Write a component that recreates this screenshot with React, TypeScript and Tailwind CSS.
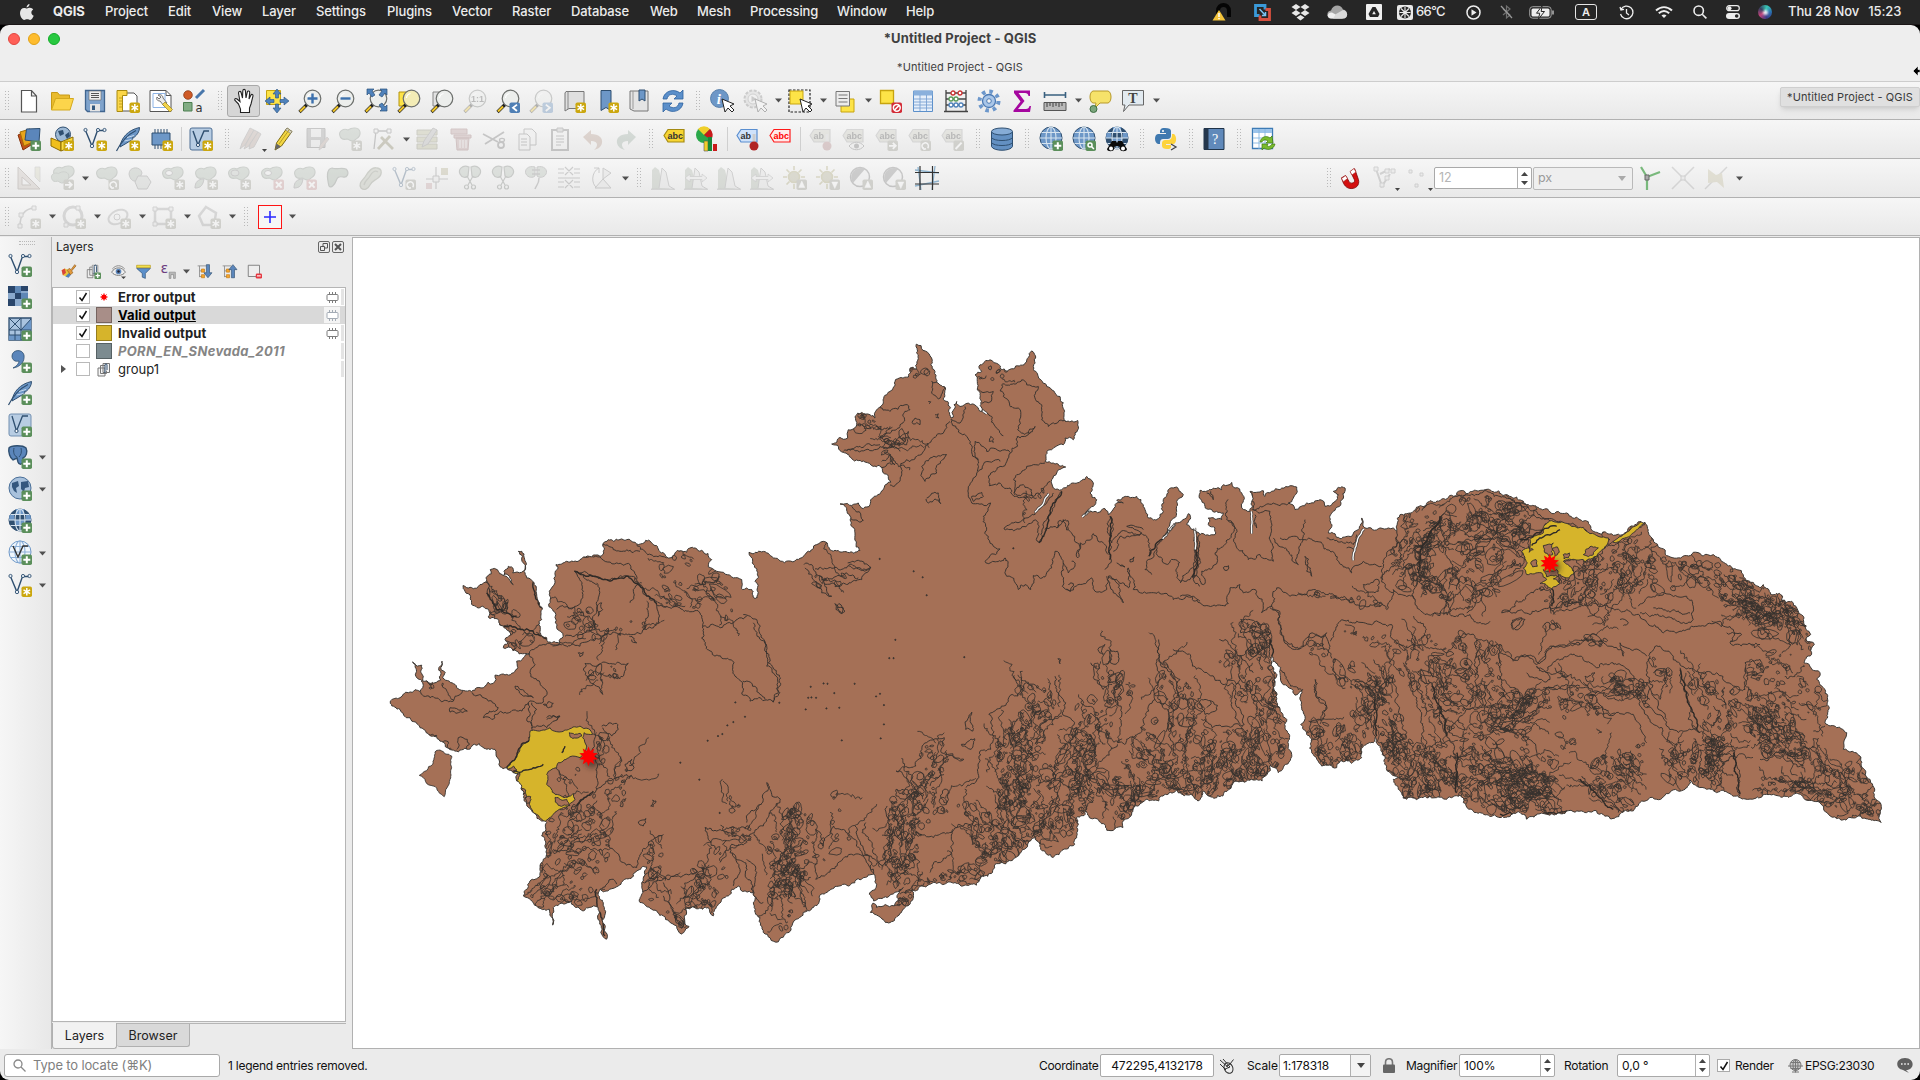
import React from "react";

/* ------------------------------------------------------------------ */
/* Icons                                                               */
/* ------------------------------------------------------------------ */

const BLUE = "#6d97c7";
const NAVY = "#2f4f70";

function Svg({ children, s = 24 }: { children: React.ReactNode; s?: number }) {
  return (
    <svg width={s} height={s} viewBox="0 0 24 24" fill="none" className="shrink-0 overflow-visible">
      {children}
    </svg>
  );
}

function Badge({ k }: { k: string }) {
  const colors: Record<string, string> = { y: "#cba70f", g: "#5b8f5b", r: "#8d8d80", x: "#c48a8a", b: "#4f7fb5", d: "#d32b36" };
  const c = colors[k[0]];
  const t = k.slice(1);
  return (
    <g>
      <rect x="13.5" y="13.5" width="10.5" height="10.5" rx="1.8" fill={c} />
      <g stroke="#fff" strokeWidth="1.5">
        {t === "*" && <path d="M18.8 15v7.6M15.5 16.9l6.6 3.8M15.5 20.7l6.6-3.8" />}
        {t === "+" && <path d="M18.8 15.2v7M15.3 18.7h7" strokeWidth="2" />}
        {t === "x" && <path d="M16 16l5.6 5.6M16 21.6l5.6-5.6" strokeWidth="2" />}
        {t === "<" && <path d="M21 15.6l-4 3.2 4 3.2" strokeWidth="1.8" />}
        {t === ">" && <path d="M16.8 15.6l4 3.2-4 3.2" strokeWidth="1.8" />}
        {t === "a" && <path d="M15 18.8h6M18.8 15.8l3 3-3 3" strokeWidth="1.8" />}
        {t === "u" && <path d="M18.8 15l3 6.5h-6z" fill="#fff" strokeWidth=".5" />}
        {t === "v" && <path d="M18.8 22.5l3-6.5h-6z" fill="#fff" strokeWidth=".5" />}
        {t === "o" && <path d="M17 22a3.2 3.2 0 1 1 3.6-.8M16 20.3l1 2 2-.6" />}
        {t === "s" && (<><circle cx="18" cy="18" r="2" /><path d="M19.5 19.5l2.4 2.6" /></>)}
        {t === "0" && (<><circle cx="18.8" cy="18.8" r="3.4" /><path d="M16.5 21l4.6-4.6" /></>)}
        {t === "/" && <path d="M15.6 22l6-6.4" strokeWidth="2" />}
      </g>
    </g>
  );
}

const Lens = ({ c = "#eceeec" }: { c?: string }) => (
  <>
    <path d="M9 15.5L1.5 23" stroke="#222" strokeWidth="3.2" />
    <path d="M7 17.5L2 22.5" stroke="#f0c52a" strokeWidth="2.2" />
    <circle cx="14.5" cy="9.500" r="8.300" fill={c} stroke="#6c6f6c" strokeWidth="1.2" />
    <path d="M9.500 9a5 5 0 0 1 4-4.500" stroke="#fff" strokeWidth="1.200" />
  </>
);
const Vee = () => (
  <g stroke={NAVY} strokeWidth="1.4">
    <path d="M2.500 3.500l6.500 15.500L14.500 3.500h7" />
    <g fill="#e9eff5" strokeWidth=".9">
      <circle cx="2.500" cy="3" r="1.600" /><circle cx="9" cy="19" r="1.700" /><circle cx="15" cy="3" r="1.600" /><circle cx="21.500" cy="3" r="1.600" />
    </g>
  </g>
);
const Feather = () => (
  <>
    <path d="M4 20C5 11 12 3 23.500.500c0 4-2 7-5 9.500l-2 .5.5 1.200C13 15 9 17 4 20z" fill={BLUE} stroke={NAVY} strokeWidth="1" />
    <path d="M.500 24C5 15 11 8 20 3.500" stroke={NAVY} strokeWidth="1.200" />
    <path d="M8.500 14l7-1.500M11 10.500l7-2" stroke="#c6daee" strokeWidth="1" />
  </>
);
const Globe = ({ dark = false, light = false }: { dark?: boolean; light?: boolean }) => (
  <>
    <circle cx="12" cy="11" r="11" fill={light ? "#f0f6fc" : dark ? NAVY : BLUE} stroke={light ? BLUE : NAVY} strokeWidth="1" />
    {dark && <path d="M1.500 6h4.500v5H1zM8 0h8v5H8zM7 11h10v5H7zM18 6h4.500l.5 5h-5z" fill={BLUE} />}
    <g stroke={light ? "#8db0d8" : "#d6e3ef"} strokeWidth="1.1">
      <ellipse cx="12" cy="11" rx="5" ry="11" /><path d="M12 0v22M1 11h22M2.500 5.500h19M2.500 16.500h19" />
    </g>
  </>
);
const Blob = () => <path d="M2 9c-2-5 4-8 8-6 4-3 11-3 12 2 1 6-4 6-6 9-4 1-5-2-7-2-4 1-6 0-7-3z" fill="#a5b2a5" stroke="#7b857b" strokeWidth="1.1" />;
const Cursor = () => <path d="M12 10l3 13 3-4 4 4 2-2-4-4 4-2z" fill="#fff" stroke="#222" strokeWidth="1" />;
const Tag = ({ f = "#f7d532", s = "#a48a12", t = "#333", l = "abc" }) => (
  <>
    <path d="M2 8.500l4-6H22v12.500H6z" fill={f} stroke={s} strokeWidth="1.200" />
    <text x="5.500" y="12.200" fontSize="9" fontWeight="700" fontFamily="Liberation Sans, sans-serif" fill={t}>{l}</text>
  </>
);
const Scissor = () => (
  <g stroke="#6a706a" strokeWidth="1.200">
    <path d="M11 1C4-2 0 4 2 8s6 4 8 2zM13 1c7-3 11 3 9 7s-6 4-8 2z" fill="#abb6ab" />
    <path d="M9 10l5 9M15 10l-5 9" /><circle cx="8.500" cy="21" r="2" /><circle cx="15.500" cy="21" r="2" />
  </g>
);
const Hist = () => (
  <>
    <path d="M1 23V4l3-3 4 3 3 12 8 7z" fill="#a3ad9f" /><path d="M8 22L11 2l4 4 3 14 5 3" stroke="#858585" fill="#dedede" /><path d="M0 23.200h24" stroke="#777" />
  </>
);
const Sun = () => (
  <g stroke="#a09a62" strokeWidth="1.600"><circle cx="11" cy="11" r="5.500" fill="#a8a584" /><path d="M11 0v4M11 18v5M0 11h4M18 11h4M3.500 3.500l3 3M18.500 3.500l-3 3M3.500 18.500l3-3" /></g>
);
const Contrast = () => (<><circle cx="11" cy="11" r="9.500" stroke="#666" strokeWidth="1.500" fill="#eee" /><path d="M4 17A9.500 9.500 0 0 1 16 3z" fill="#777" /></>);

const icons: Record<string, React.ReactNode> = {
  newDoc: <path d="M4.500 1.500h10l5 5.500v16h-15zM14.500 1.500V7h5" fill="#fff" stroke="#555" strokeWidth="1.200" />,
  open: <><path d="M1.500 21V3.500h6l2 2.500h10v4" fill="#e9bb2e" stroke="#c79a17" /><path d="M1.500 21l4-11.500h18L20 21z" fill="#fcd54b" stroke="#d4a91d" /></>,
  save: <><path d="M2.500 1.500h19v21h-17l-2-2z" fill="#7fa3cc" stroke="#40658f" strokeWidth="1.300" /><path d="M6 2h12v9H6z" fill="#eee" stroke="#666" strokeWidth=".6" /><path d="M8 4.500h8M8 6.500h8M8 8.500h8" stroke="#555" /><path d="M7 15h10v7.500H7z" fill="#e5e5e5" /><path d="M9 16.500h3v4.500H9z" fill="#33597f" /></>,
  layout: <><path d="M5 4h13l3 3v15H5z" fill="#fff" stroke="#555" /><path d="M1 1.500h10v5H6.500v16H1z" fill="#fbd648" stroke="#a88a10" /><path d="M3 9h3M3 12h3M3 15h3M3 18h3" stroke="#a88a10" strokeWidth=".7" /><Badge k="y*" /></>,
  layoutMgr: <><path d="M1 1.500h16l5 5v16H1z" fill="#fff" stroke="#555" /><path d="M17 1.500v5h5" stroke="#555" /><path d="M4 4.500h12v14H4z" stroke="#8db4e6" /><path d="M9 6c2-1 5 0 5 3l4 5-3 3-4-5c-3 0-4-2-3-4l2 2 2-2z" fill="#ececec" stroke="#666" strokeWidth=".9" /><path d="M16 13l7.500 7.500-2.500 2.500-7.500-7.500z" fill="#f2d34a" stroke="#97801b" strokeWidth=".7" /></>,
  styles: <><circle cx="6" cy="6" r="4.300" fill="#cf5a26" stroke="#8c3a16" strokeWidth=".8" /><path d="M14 9l8-8" stroke="#4877ab" strokeWidth="3" /><path d="M1.500 13.500h8.500v8.500H1.500z" fill="#82ad85" stroke="#4c7f50" /><text x="13.500" y="22.500" fontSize="11.500" fontFamily="DejaVu Sans, sans-serif" fill="#333">a</text></>,
  hand: <path d="M6.500 15L3 11.500c-1-1.500.8-2.500 2-1.500l3 2.500L6.500 4c0-2 2.200-2 2.600-.5L10.500 9l.3-7.300c.2-1.800 2.500-1.700 2.600 0L14 9l1.300-6c.5-1.600 2.600-1.200 2.400.6L17 10l1.800-3.800c.8-1.400 2.500-.7 2.200.8L19 15l-1.500 4v4.500h-9V20z" fill="#fff" stroke="#222" strokeWidth="1.100" />,
  pan: <><path d="M1.500 1.500h14v14h-14z" fill="#fde347" stroke="#c7a40f" /><g fill="#4f82bb" stroke="#28507c" strokeWidth=".6"><path d="M12 0l4 5h-2.500v4h-3V5H8zM12 24l4-5h-2.500v-4h-3v4H8zM0 12l5-4v2.500h4v3H5V16zM24 12l-5-4v2.500h-4v3h4V16z" /></g></>,
  zoomIn: <><Lens /><path d="M14.500 4.500v10M9.500 9.500h10" stroke="#3d71ad" strokeWidth="2.400" /></>,
  zoomOut: <><Lens /><path d="M9.500 9.500h10" stroke="#3d71ad" strokeWidth="2.400" /></>,
  zoomFull: <><Lens /><g fill="#4f82bb" stroke="#28507c" strokeWidth=".7"><path d="M3 0h7L8 2l3 4-3 2-3-4-2 2zM23 0h-7l2 2-3 4 3 2 3-4 2 2zM23 22h-7l2-2-3-4 3-2 3 4 2-2z" /></g></>,
  zoomSel: <><path d="M2 3h10v14H2z" fill="#fde347" stroke="#b49410" /><Lens c="#f3ecb6" /></>,
  zoomLayer: <><path d="M3 3h9v14H3z" fill="#e2e2e2" stroke="#888" /><Lens /></>,
  zoomNat: <><Lens /><text x="8" y="13" fontSize="9" fontWeight="700" fontFamily="Liberation Sans, sans-serif" fill="#444">1:1</text></>,
  zoomLast: <><Lens /><Badge k="b<" /></>,
  zoomNext: <><Lens /><Badge k="b>" /></>,
  newMap: <><path d="M4 2.500h18v17H7l-4 2.500V4z" fill="#dfdfdf" stroke="#777" /><path d="M6 2.500V20" stroke="#888" /><Badge k="y*" /></>,
  bookmark: <><path d="M6 1.500h10v20l-5-3-5 3z" fill={BLUE} stroke={NAVY} /><Badge k="y*" /></>,
  bookmarks: <><path d="M2 2h18v20H6l-4-2z" fill="#e4e4e4" stroke="#777" /><path d="M5 2v18" stroke="#999" /><path d="M11 1h6v11l-3-2-3 2z" fill={BLUE} stroke={NAVY} /></>,
  refresh: <g fill="#5b8fca" stroke="#2d62a0" strokeWidth=".8"><path d="M2 10C3 2 13-1 19 4l3-3v9h-9l3-3C12 4 7 5 6 10zM22 14c-1 8-11 11-17 6l-3 3v-9h9l-3 3c4 3 9 2 10-3z" /></g>,
  info: <><circle cx="9.500" cy="9.500" r="9" fill={BLUE} stroke="#45719f" strokeWidth=".8" /><text x="6.800" y="15" fontSize="15" fontStyle="italic" fontWeight="700" fontFamily="Liberation Serif, serif" fill="#fff">i</text><Cursor /></>,
  action: <><circle cx="10" cy="10" r="8.500" fill="#ccc" stroke="#777" strokeWidth="2" strokeDasharray="3 1.500" /><circle cx="10" cy="10" r="5" fill="#eee" stroke="#888" /><path d="M8.500 7l5 3-5 3z" fill="#777" /><Cursor /></>,
  select: <><path d="M1 1h21v22H1z" stroke="#222" strokeWidth="1.200" strokeDasharray="2.500 1.500" /><path d="M2 2h13v13H2z" fill="#fde347" stroke="#c7a40f" /><Cursor /></>,
  selForm: <><path d="M8 10h13v13H8z" fill="#fde347" stroke="#c7a40f" /><path d="M3 2.500h13.500V17H3z" fill="#ececec" stroke="#777" /><path d="M5.500 6h9M5.500 9.500h9M5.500 13h9" stroke="#777" /></>,
  desel: <><path d="M2.500 1.500h13v13h-13z" fill="#fde347" stroke="#c7a40f" strokeWidth="1.300" /><Badge k="d0" /></>,
  table: <><path d="M2.500 2h19v20.500h-19z" fill="#e6effa" stroke="#5b8fca" /><path d="M2.500 2h19v4.500h-19z" fill="#8ab0dc" /><path d="M2.500 10h19M2.500 13h19M2.500 16h19M2.500 19h19M9 6v16M15.500 6v16" stroke="#7aa2d2" strokeWidth=".9" /></>,
  abacus: <><path d="M2 1v21M22 1v21M0 22.500h24M2 4h20M2 10h20M2 16h20" stroke="#444" strokeWidth="1.300" /><g fill="#fff" strokeWidth="1.300"><g stroke="#c33"><circle cx="9" cy="4" r="2" /><circle cx="16" cy="4" r="2" /></g><g stroke="#5a9c5a"><circle cx="7" cy="10" r="2" /><circle cx="12" cy="10" r="2" /></g><g stroke="#4f82bb"><circle cx="7" cy="16" r="2" /><circle cx="12" cy="16" r="2" /><circle cx="17" cy="16" r="2" /></g></g></>,
  gear: <><circle cx="12" cy="12" r="9.500" stroke="#6c97cb" strokeWidth="4" strokeDasharray="3.500 3.960" /><circle cx="12" cy="12" r="6.500" fill="#a9c6e8" stroke="#4a7ab5" strokeWidth="1.300" /><circle cx="12" cy="12" r="2.300" fill="#f3f3f3" stroke="#4a7ab5" /></>,
  sigma: <path d="M4 1.500h16V7h-1.500c-.3-2-1.500-3-3.500-3H8.500l6 8-6.500 8h8c2 0 3-1 3.500-3H21l-1 6H3.500v-1.500l7-9-6.500-8.500z" fill="#a5079f" />,
  ruler: <><path d="M1 6h22M1.500 3v6M22.500 3v6" stroke="#39607f" strokeWidth="1.600" /><path d="M1 13.500h22v8H1z" fill="#b9b9b9" stroke="#555" /><path d="M4 14v4M7 14v3M10 14v4M13 14v3M16 14v4M19 14v3" stroke="#333" strokeWidth=".9" /></>,
  tips: <><path d="M5 2h15c4 1 4 11 0 12h-8l-5 5 1-5H5C1 13 1 3 5 2z" fill="#f6e26a" stroke="#b7992a" /><circle cx="5.500" cy="20" r="3.500" fill="#7ba57c" stroke="#3f6f43" /></>,
  anno: <><path d="M1.500 1.500h21v14.500H8l-5.500 6.500L4 16H1.500z" fill="#e2eaf0" stroke="#666" /><text x="7.200" y="13.500" fontSize="14" fontWeight="700" fontFamily="Liberation Serif, serif" fill="#444">T</text></>,
  dsm: <><path d="M1 8l9-4 4 14-8 5z" fill="#c4511d" stroke="#863208" /><path d="M3 5l10-3 3 13-9 4z" fill="#e9a51c" stroke="#a66f05" /><path d="M9.500 2L23 1.500 22 15l-14-2z" fill="#5b86bb" stroke={NAVY} /><Badge k="g+" /></>,
  geopkg: <><circle cx="13" cy="7.500" r="7.500" fill="#9cb8d4" stroke={NAVY} /><path d="M8 4l5-1 1 4-4 2zM15 8l4-3 1 4-3 3z" fill={NAVY} /><path d="M1 11l10 4v9L1 19z" fill="#f0bf1c" stroke="#8c6c05" /><path d="M11 15l12-5v9l-12 5z" fill="#fbdc43" stroke="#8c6c05" /><Badge k="y*" /></>,
  vecNew: <><Vee /><Badge k="y*" /></>,
  vecAdd: <><Vee /><Badge k="g+" /></>,
  featherNew: <><Feather /><Badge k="y*" /></>,
  featherAdd: <><Feather /><Badge k="g+" /></>,
  chip: <><path d="M3 6h18v12H3z" fill={BLUE} stroke={NAVY} /><path d="M6 2v4M9 2v4M12 2v4M15 2v4M18 2v4M6 18v4M9 18v4M12 18v4" stroke={NAVY} /><Badge k="y*" /></>,
  vrt: <><rect x="1" y="1" width="22" height="22" rx="2" fill="#b8cde3" stroke="#4e6f94" /><path d="M4 4l5 14 6-14h5" stroke={NAVY} strokeWidth="1.400" /><circle cx="9" cy="18" r="1.600" fill="#fff" stroke={NAVY} /><Badge k="y*" /></>,
  vrtAdd: <><rect x="1" y="1" width="22" height="22" rx="2" fill="#b8cde3" stroke="#7390b1" /><path d="M4 3l4.500 15 6-15h5.500" stroke={NAVY} strokeWidth="1.300" /><circle cx="8.500" cy="18" r="1.600" fill="#fff" stroke={NAVY} /><Badge k="g+" /></>,
  pencils: <g stroke="#777" strokeWidth=".8" fill="#b29c93"><path d="M1 22l2-6L11 1l4 2L6 18z" /><path d="M5 22l2-5L15 3l4 2-9 14z" /><path d="M10 22l1-5 8-12 3 2-7 13z" /></g>,
  pencil: <><path d="M3 23l1.500-7L15 1l5 3.500L9.500 19z" fill="#f3d643" stroke="#7d6a12" /><path d="M15 1l5 3.500-1.500 2-5-3.500z" fill="#d9d3bb" stroke="#777" strokeWidth=".6" /><path d="M3 23l1.500-6.500 4.500 3z" fill="#666" /><path d="M7 17L17 3" stroke="#b39c26" /></>,
  saveEdit: <><path d="M2 1.500h18v19H2z" fill="#8f8f8f" stroke="#666" /><path d="M6 2h10v8H6zM6 13h9v7H6z" fill="#e5e5e5" /><path d="M14 23l1-5 7-8 2 2-7 9z" fill="#b29c93" stroke="#777" strokeWidth=".6" /></>,
  addFeat: <><Blob /><Badge k="r*" /></>,
  vertex: <><path d="M3 22L5 4h14" stroke="#666" strokeWidth="1.300" /><path d="M3 2h4v4H3zM16 2h4v4h-4z" fill="#eee" stroke="#666" /><path d="M7 22L19 9M10 10l12 12" stroke="#7d7755" strokeWidth="2.800" /></>,
  multi: <><path d="M1 3h20v5H1zM1 10h20v5H1zM1 17h20v5H1z" fill="#b3b38c" stroke="#7b7b60" /><path d="M6 20l2-6L17 1l4 2-9 14z" fill="#aaa" stroke="#777" /></>,
  trash: <><path d="M2 2h16v5H2z" fill="#b39090" stroke="#8b6060" /><path d="M5 8h17v3H5zM7 11h13l-1 12H8z" fill="#b39090" stroke="#8b6060" /><path d="M11 13v8M14 13v8M17 13v8" stroke="#eee" /></>,
  cut: <g stroke="#666" strokeWidth="1.800"><path d="M1 7l15 8M3 17L22 5" /><circle cx="19" cy="18" r="3" /><ellipse cx="20" cy="13" rx="2.500" ry="1.600" strokeWidth="1.300" /></g>,
  copy: <g fill="#eee" stroke="#666"><path d="M9 2h8l4 4v12H9z" /><path d="M4 7h8l3 3v13H4z" /><path d="M6 12h6M6 15h6M6 18h6" /></g>,
  paste: <g stroke="#666" fill="#eee"><path d="M4 3h16v20H4z" strokeWidth="2" /><path d="M9 1h6v4H9z" fill="#bbb" /><path d="M8 9h8M8 12h8M8 15h8M8 18h5" /></g>,
  undo: <path d="M2 10l8-7v4c8 0 12 4 11 9-1 4-4 6-8 7 4-3 5-9-3-9v4z" fill="#ae8f7f" />,
  redo: <path d="M22 10l-8-7v4C6 7 2 11 3 16c1 4 4 6 8 7-4-3-5-9 3-9v4z" fill="#8fa396" />,
  label: <Tag />,
  diagram: <><circle cx="9" cy="8" r="8" fill="#2aa84a" /><path d="M9 8L3 2a8 8 0 0 1 12 0z" fill="#f0cf2a" /><path d="M9 8l6-6a8 8 0 0 1 1 11z" fill="#c81a1a" /><path d="M9 14h4v10H9z" fill="#f0cf2a" stroke="#555" strokeWidth=".6" /><path d="M13 10h4v14h-4z" fill="#18883a" /><path d="M18 17h4v7h-4z" fill="#c81a1a" /></>,
  labelPin: <><Tag f="#cfe2fa" s="#5a8ed0" l="ab" /><path d="M19 7v10" stroke="#ccc" strokeWidth="3" /><circle cx="19" cy="19" r="4.500" fill="#b02525" /></>,
  labelRed: <Tag f="#ffe9e9" s="#ff1a1a" t="#f00" />,
  lblPin: <><Tag f="#c5c5b8" s="#999" l="ab" /><path d="M19 7v10" stroke="#ccc" strokeWidth="3" /><circle cx="19" cy="19" r="4.500" fill="#a77" /></>,
  lblEye: <><Tag f="#c5c5b8" s="#999" /><path d="M8 19c4-5 11-5 15 0-4 5-11 5-15 0z" fill="#eee" stroke="#666" /><circle cx="15.500" cy="19" r="2.500" fill="#666" /></>,
  lblMove: <><Tag f="#c5c5b8" s="#999" /><Badge k="ra" /></>,
  lblRot: <><Tag f="#c5c5b8" s="#999" /><Badge k="ro" /></>,
  lblEdit: <><Tag f="#c5c5b8" s="#999" /><Badge k="r/" /></>,
  db: <g stroke={NAVY}><path d="M1.500 5v14.500c2 5 19 5 21 0V5z" fill="#6390c2" /><ellipse cx="12" cy="4.500" rx="10.500" ry="3.500" fill="#86acd6" /><path d="M1.500 10.500c2 4 19 4 21 0M1.500 15.500c2 4 19 4 21 0" /></g>,
  globeAdd: <><Globe /><Badge k="g+" /></>,
  globeSearch: <><Globe /><Badge k="gs" /></>,
  globeBino: <><Globe dark /><path d="M7 14h4l1 2 1-2h4l5 8c0 3-7 3-7 0l-1-3h-4l-1 3c0 3-7 3-7 0z" fill="#0b0b0b" /><circle cx="6" cy="21.500" r="2" fill="#fff" /><circle cx="18" cy="21.500" r="2" fill="#fff" /></>,
  python: <><path d="M11 1C6 1 6 3 6 6h6v1H4C0 7 0 16 4 17h2c0-6 2-5 7-5 3 0 4-1 4-4V4c0-2-2-3-6-3z" fill="#3f79b0" /><path d="M13 22c5 0 4-2 4-4h-5v-1h7c4 0 4-8 1-10h-2c0 6-2 6-6 6-3 0-4 1-4 4v2c0 2 2 3 5 3z" fill="#fdd33c" /><circle cx="9" cy="4" r="1" fill="#fff" /><path d="M17 17l5 3-5 3" stroke="#444" strokeWidth="1.300" /></>,
  help: <><path d="M2 1.500h20v21H2z" fill="#6089ba" stroke="#1f3348" /><path d="M2 1.500h4.500v21H2z" fill="#24364c" /><text x="10" y="17" fontSize="14" fontFamily="Liberation Serif, serif" fill="#fff">?</text></>,
  sheet: <><path d="M1.500 1.500h20v20h-20z" fill="#fff" stroke="#3d7bb5" strokeWidth="1.300" /><path d="M2 2h19v4H2z" fill="#9cc4ea" /><path d="M8 2v20M14 2v20M2 11h20M2 16h20" stroke="#86b5e0" strokeWidth=".9" /><path d="M9 15c1-5 6-7 10-4l2-2 1 7h-7l2-2c-3-2-5-1-6 1zM24 17c-1 5-7 7-11 4l-2 2v-6h6l-1 2c2 1 4 0 5-2z" fill="#79bb2c" stroke="#3f7a10" strokeWidth=".7" /></>,
  tri: <><path d="M1 1v22h22z" fill="#c5bbb4" stroke="#82766e" /><path d="M5 11v8h9z" fill="#eee" stroke="#82766e" /><path d="M18 1h5v15l-5-5z" fill="#cfcfb5" stroke="#999" strokeWidth=".7" /></>,
  fMove: <><g transform="translate(2 -1)"><Blob /></g><g transform="translate(0 5) scale(.85)"><Blob /></g><Badge k="ra" /></>,
  fRot: <><Blob /><Badge k="ro" /></>,
  fSimp: <><path d="M1 8c0-8 12-8 13-1l-3 7c-5 3-9 0-10-6z" fill="#a8b3a8" stroke="#777" /><path d="M10 10h9l4 6-4 7h-9l-3-7z" fill="#c4c8c4" stroke="#777" /></>,
  fRing: <><Blob /><ellipse cx="8" cy="7" rx="3.500" ry="2.500" fill="#eee" stroke="#777" /><Badge k="r*" /></>,
  fPart: <><Blob /><path d="M1 22c0-6 3-9 9-9-1 6-3 9-9 9z" fill="#a8b3a8" stroke="#777" /><Badge k="r*" /></>,
  fFill: <><Blob /><ellipse cx="8" cy="7" rx="4" ry="3" fill="#b9bfb9" stroke="#777" /><Badge k="r*" /></>,
  fRingX: <><Blob /><ellipse cx="8" cy="7" rx="3.500" ry="2.500" fill="#eee" stroke="#777" /><Badge k="xx" /></>,
  fPartX: <><Blob /><path d="M1 22c0-6 3-9 9-9-1 6-3 9-9 9z" fill="#a8b3a8" stroke="#777" /><Badge k="xx" /></>,
  fReshape: <path d="M3 20C1 12 0 3 6 2c5 2 9-1 14 1 4 4 1 9-3 8-5-1-6 1-7 4s-5 8-7 5z" fill="#98a798" stroke="#687068" strokeWidth="1.200" />,
  fOffset: <path d="M2 22c-3-5 2-8 4-11S12 0 18 2c6 1 5 7 1 10s-6 3-8 7-6 6-9 3zM5 19c1-5 4-5 6-9s5-6 8-4" fill="#aeb3a2" stroke="#7b806f" strokeWidth="1.300" />,
  fSplitV: <><Vee /><Badge k="ro" /></>,
  fCross: <><path d="M11 1v22M1 13h22" stroke="#777" strokeWidth="1.200" /><path d="M8 10h6v6H8z" fill="#e5e5e5" stroke="#777" /><path d="M16 2h7v7h-7z" fill="#aaa580" /><path d="M1 17h6v6H1z" fill="#c09a9a" /></>,
  scis: <Scissor />,
  merge: <g stroke="#777" fill="#abb6ab"><path d="M11 1C4-1 0 4 2 8s7 4 9 2zM13 1c7-2 11 3 9 7s-7 4-9 2z" /><path d="M8 4h8M8 8h8M15 12c0 7-3 7-4 11" fill="none" strokeWidth="1.500" /></g>,
  align: <path d="M1 3h6m10 0h6M1 7h6m10 0h6M8 1l8 8M16 1L8 9M1 16h6m10 0h6M1 21h6m10 0h6M8 14l8 8M16 14l-8 8M1 12h22" stroke="#777" strokeWidth="1.100" />,
  rotSym: <g stroke="#777"><path d="M9 2C1 6 1 18 7 22M4 2h5v5" /><path d="M13 2v11l8-6zM5 22h16l-8-9z" fill="#ddd" /></g>,
  hist: <Hist />,
  histA: <><Hist /><path d="M1 12l5-4v2.500h12V8l5 4-5 4v-2.500H6V16z" fill="#e6e6e6" stroke="#888" strokeWidth=".8" /></>,
  sunU: <><Sun /><Badge k="ru" /></>,
  sunD: <><Sun /><Badge k="rv" /></>,
  conU: <><Contrast /><Badge k="ru" /></>,
  conD: <><Contrast /><Badge k="rv" /></>,
  grid: <><path d="M0 4l24 3M3 1l3 23M0 20l24-5M20 0l-3 24" stroke="#8fb3cd" strokeWidth="1.300" /><path d="M5 0v24M17.500 0v24M0 6.500h24M0 18h24" stroke="#333" strokeWidth="1.200" /></>,
  magnet: <><path d="M2.500 12.500c2 5 4 9.500 9 10 6 .5 10-4 8-9.500L15 2.500l-4 3 4.500 8c1.500 3-3.500 5-5 2.500l-4-6z" transform="rotate(4 12 12)" fill="#d40f0f" stroke="#7d0606" strokeWidth=".8" /><path d="M2.500 12.500l4-3 2 3-4 3.300zM11 5.500l4-3 2 3.500-4 3z" fill="#fff" stroke="#a22" strokeWidth=".7" /></>,
  snapV: <g stroke="#888" fill="#ddd"><path d="M4 3l6 17L18 8M8 8l10-5" fill="none" strokeWidth="2" /><path d="M2 1h4v4H2zM13 3h4v4h-4zM19 3h4v4h-4zM13 10h4v4h-4zM8 17h4v4H8z" /></g>,
  snapP: <g stroke="#888" fill="#ddd"><path d="M4 4h3v3H4zM15 7h3v3h-3zM10 18h3v3h-3z" /></g>,
  topo: <><path d="M3 1l6 10 13-5M9 11v13" stroke="#79b97c" strokeWidth="2.200" /><path d="M7 9h4v5H7z" fill="#aaa" stroke="#666" /></>,
  inter: <><path d="M1 1l22 22M23 1L1 23" stroke="#999" strokeWidth="1.600" /><path d="M10 10h4v4h-4z" fill="#ddd" stroke="#888" /></>,
  trace: <><path d="M1 23L23 1" stroke="#999" strokeWidth="1.500" /><path d="M4 3l8 6 6-2 2 15-7-6-9 1z" fill="#bcb590" /></>,
  arc: <><path d="M3 21C3 11 7 4 17 3" stroke="#888" strokeWidth="1.600" /><path d="M1 19h4v4H1zM2 8h4v4H2zM15 1h4v4h-4z" fill="#ddd" stroke="#888" /><Badge k="r*" /></>,
  circ: <><circle cx="11" cy="11" r="9" stroke="#999" strokeWidth="3" /><path d="M2 18h4v4H2zM14 1h4v4h-4z" fill="#ddd" stroke="#888" /><Badge k="r*" /></>,
  ell: <><ellipse cx="11" cy="12" rx="10" ry="6.500" transform="rotate(-25 11 12)" stroke="#999" strokeWidth="2" /><circle cx="10" cy="12" r="3" stroke="#888" /><Badge k="r*" /></>,
  rect: <><path d="M3 4h16v15H3z" stroke="#999" strokeWidth="2.500" /><path d="M1 2h4v4H1zM17 2h4v4h-4zM1 17h4v4H1z" fill="#ddd" stroke="#888" /><Badge k="r*" /></>,
  poly: <><path d="M9 2l10 6-2 12H6L2 11z" stroke="#999" strokeWidth="2.500" /><Badge k="r*" /></>,
  raster: <><path d="M0 1h20v20H0z" fill="#8aa9cc" /><path d="M0 1h7v7H0zM7 8h6v6H7zM0 14h7v7H0zM13 1h7v5h-7z" fill="#29456a" /><path d="M7 1h6v7H7zM13 8h7v6h-7z" fill="#5e87b5" /><Badge k="g+" /></>,
  mesh: <><path d="M1 1h22v22H1z" fill="#a9c3df" stroke={NAVY} strokeWidth="1.300" /><path d="M13 13L23 2v11zM1 18h12v5H1z" fill={BLUE} /><path d="M1 1l12 12L23 2M13 1v12M1 13h22M1 13L13 1M7 13v10M13 13v10M1 18h12" stroke={NAVY} strokeWidth="1" /><Badge k="g+" /></>,
  comma: <><path d="M4 7c0-6 10-8 12-1 1 7-4 12-11 13 4-2 6-5 6-7-4 1-7-1-7-5z" fill="#5b86bb" stroke={NAVY} strokeWidth=".8" /><Badge k="g+" /></>,
  pg: <><path d="M1 3C3 0 15 0 18 3c2 4 0 9-3 10v4c-1 3-4 3-5 0l-1-4-4 2C2 13 0 7 1 3z" fill="#5b86bb" stroke={NAVY} strokeWidth="1.400" /><path d="M6 3c-1 4 0 8 3 9M13 3c1 4 0 7-2 9" stroke={NAVY} /><Badge k="g+" /></>,
  globeOld: <><circle cx="12" cy="11" r="11" fill="#a8c1dc" stroke="#4a6f98" /><path d="M4 6l6-2 1 5-3 2 1 5-3-2-2-4zM13 5l7-1 1 6-4 1-1 4-3-3z" fill="#34577e" /><Badge k="g+" /></>,
  globeDark: <><Globe dark /><Badge k="g+" /></>,
  wfs: <><Globe light /><path d="M5 5l5 11 5-11h5" stroke="#333" strokeWidth="1.400" /><Badge k="g+" /></>,
};

/* ------------------------------------------------------------------ */
/* Toolbars                                                            */
/* ------------------------------------------------------------------ */

function Handle({ w }: { w: number }) {
  return (
    <div className="flex h-full shrink-0 items-center justify-center" style={{ width: w }}>
      <svg width="4" height="20" viewBox="0 0 4 20">
        {Array.from({ length: 7 }, (_, i) => (
          <g key={i} fill="#b9b9b9">
            <rect x="0" y={i * 3} width="1" height="1" />
            <rect x="3" y={i * 3} width="1" height="1" />
          </g>
        ))}
      </svg>
    </div>
  );
}

function Caret() {
  return (
    <svg width="7" height="5" viewBox="0 0 7 5" className="shrink-0">
      <path d="M0 .5h7L3.500 4.500z" fill="#505050" />
    </svg>
  );
}

/* Tokens: "h16" grip of 16px, "|" divider, "v" drop-down arrow, "-name" disabled icon, "_40" gap, "^" suffix for a corner menu arrow. */
function Tools({ items }: { items: string }) {
  return (
    <>
      {items.split(" ").map((t, i) => {
        if (/^h\d+$/.test(t)) return <Handle key={i} w={+t.slice(1)} />;
        if (/^_\d+$/.test(t)) return <div key={i} className="shrink-0" style={{ width: +t.slice(1) }} />;
        if (t === "|")
          return (
            <div key={i} className="flex w-[7px] shrink-0 justify-center">
              <div className="h-6 w-px bg-[#cfcfcf]" />
            </div>
          );
        if (t === "v")
          return (
            <div key={i} className="flex w-3 shrink-0 justify-center">
              <Caret />
            </div>
          );
        const off = t[0] === "-";
        const corner = t.endsWith("^");
        const name = t.replace(/^-|\^$/g, "");
        return (
          <div
            key={i}
            className={
              "relative -ml-px mr-px flex h-8 w-[33px] shrink-0 items-center justify-center " +
              (name === "hand" ? "rounded-[3px] border border-[#a9a9a9] bg-[#d6d6d6]" : "")
            }
          >
            <div className={off ? "opacity-30" : ""}>
              <Svg>{icons[name]}</Svg>
            </div>
            {corner && (
              <svg width="5" height="3" viewBox="0 0 5 3" className="absolute bottom-[3px] right-0">
                <path d="M0 0h5L2.500 3z" fill="#444" />
              </svg>
            )}
          </div>
        );
      })}
    </>
  );
}

function Bar({ children, cls = "h-[39px]" }: { children: React.ReactNode; cls?: string }) {
  return <div className={"flex shrink-0 items-center border-b border-[#b1b1b1] bg-linear-to-b from-[#f6f6f6] to-[#e9e9e9] " + cls}>{children}</div>;
}

function Steps() {
  return (
    <div className="flex h-full w-[14px] shrink-0 flex-col items-center justify-center gap-[5px] border-l border-[#b0b0b0]">
      <svg width="7" height="4" viewBox="0 0 7 4"><path d="M0 4h7L3.500 0z" fill="#444" /></svg>
      <svg width="7" height="4" viewBox="0 0 7 4"><path d="M0 0h7L3.500 4z" fill="#444" /></svg>
    </div>
  );
}

/* ------------------------------------------------------------------ */
/* Map geometry                                                        */
/* ------------------------------------------------------------------ */

type P = [number, number];
type Frame = [number, number, number, number];

const W: Frame = [380, 520, 3, 3];
const N: Frame = [780, 330, 3, 3];
const S: Frame = [780, 600, 2.8, 3];
const C: Frame = [1180, 460, 3, 3];
const E: Frame = [1500, 460, 3, 3];

const at = (f: Frame, s: string): P[] =>
  s.trim().split(/\s+/).map((p) => {
    const [x, y] = p.split(",").map(Number);
    return [f[0] + x / f[2], f[1] + y / f[3]];
  });

let seed = 77;
const rnd = () => {
  seed = (seed * 1664525 + 1013904223) % 4294967296;
  return seed / 4294967296;
};

function rough(a: P, b: P, amp: number, out: P[]) {
  const d = Math.hypot(b[0] - a[0], b[1] - a[1]);
  if (d < 2.6) {
    out.push(b);
    return;
  }
  const k = (rnd() - 0.5) * Math.min(d, 9) * amp;
  const m: P = [(a[0] + b[0]) / 2 + (-(b[1] - a[1]) / d) * k, (a[1] + b[1]) / 2 + ((b[0] - a[0]) / d) * k];
  rough(a, m, amp, out);
  rough(m, b, amp, out);
}

function toPath(pts: P[], closed: boolean, amp = 0.45) {
  const out: P[] = [pts[0]];
  for (let i = 1; i < pts.length; i++) rough(pts[i - 1], pts[i], amp, out);
  if (closed) rough(pts[pts.length - 1], pts[0], amp, out);
  return "M" + out.map((p) => p[0].toFixed(1) + " " + p[1].toFixed(1)).join("L") + (closed ? "Z" : "");
}

const outline: P[] = [
  ...at(W, "31,545 60,535 85,520 105,511 120,516 128,505 118,480 108,460 98,427 112,440 125,437 122,455 130,470 128,485 150,492 165,490 182,482 183,462 176,452 186,425 184,452 196,460 188,475 208,485 225,495 238,510 250,513 275,516 290,505 315,500 325,488 340,492 345,467 365,464 385,467 405,455 412,440 410,425 430,415 448,403 410,395 370,385 385,370 375,360 390,348 372,325 355,300 325,292 326,270 308,260 275,255 272,232 255,215 249,198 270,203 290,206 300,195 320,185 318,175 334,163 331,150 338,148 355,155 400,195 372,165 372,155 385,140 400,150 398,160 425,158 435,150 430,130 415,95 432,103 437,145 432,155 440,175 460,187 468,215 475,245 487,265 485,300 480,335 500,355 505,368 540,370 550,350 530,325 526,290 507,262 512,235 508,215 525,190 528,135 560,125 600,120 610,112 660,110 670,95 668,75 685,60 700,65 740,60 765,68 775,75 797,62 825,78 835,88 860,112 870,115 885,100 920,98 945,85 965,92 995,120 985,142 1010,155 1060,175 1085,180 1088,210 1100,205 1115,210 1125,238 1125,185 1133,158 1118,125 1107,98 1145,97 1180,115 1225,124 1250,119"),
  ...at(N, "60,686 80,668 110,645 137,637 165,662 240,662 225,610 212,575 180,523 235,520 250,537 270,525 275,507 310,480 332,458 325,440 310,430 298,407 280,410 255,397 215,387 190,368 155,343 180,323 203,325 205,300 230,285 225,260 245,248 270,255 285,265 290,240 310,215 330,185 345,155 385,142 390,115 408,118 415,75 409,43 450,78 452,105 465,125 468,148 493,170 490,205 503,215 509,255 513,265 520,262 522,225 530,215 540,230 565,220 590,230 605,245 602,210 592,180 592,155 585,135 605,125 600,105 630,90 655,103 662,118 700,117 735,100 755,63 763,88 760,110 775,140 800,170 840,200 852,240 860,275 893,272 895,290 880,330 855,325 850,345 825,352 810,360 795,395 820,400 857,412 830,430 815,450 820,475 845,480 870,465 905,452 920,440 940,460 930,490 950,510 940,530 915,555 945,545 975,537 985,555 995,545 1005,525 1030,520 1010,512 1045,500 1070,500 1090,525 1105,565 1135,567 1150,545 1150,510 1165,480 1185,473 1210,495 1190,515 1190,545 1175,570 1150,620 1185,580 1225,552"),
  ...at(C, "30,165 20,195 40,210 60,225 105,225 105,205 85,195 85,175 125,180 130,160 90,148 75,140 58,105 60,92 125,90 130,75 155,68 165,85 185,100 185,145 210,155 215,125 210,95 250,93 255,110 300,90 350,82 350,100 325,130 345,150 420,120 435,140 465,125 475,105 460,95 475,83 495,85 485,120 460,155 445,220 480,237 515,230 535,210 545,175 555,205 600,205 625,205 650,215 660,165 700,155 750,123 830,105 835,95 955,93"),
  ...at(E, "50,112 80,135 115,143 150,157 200,160 240,180 290,218 340,227 370,225 405,195 435,188 447,225 480,265 510,292 560,288 580,278 605,288 640,285 690,318 730,345 780,385 790,375 812,405 845,407 845,422 875,425 910,470 918,510 932,525 920,545 943,555 935,580 912,610 935,630 960,640 950,660 975,690 982,730 975,790 1010,805 1040,820 1030,870 1080,890 1110,960 1120,1000 1143,1035 1143,1090 1110,1080 1080,1070 1010,1078 985,1065 960,1030 910,1015 880,1005 820,1005 780,1015 720,1015 690,1003 620,990 570,962 555,990 510,1000 470,1020 420,1030 395,1055 330,1078 290,1055 250,1057 200,1055 170,1065 140,1065 80,1080 60,1060"),
  ...at(C, "960,1075 890,1060 850,1030 840,1007 800,1020 680,1020 655,990 640,960 655,955 620,920 615,890 587,830 580,850 550,860 545,895 515,912 480,905 470,925 425,920 395,880 380,825 362,795 375,770 368,690 345,707 305,670 300,640 275,590 290,650 292,740 320,780 325,860 335,885 310,925 295,940"),
  ...at(S, "1370,500 1350,545 1270,548 1240,590 1215,597 1185,575 1170,605 1110,573 1060,605 1025,600 985,640 960,685 915,693 865,650 857,635 830,655 825,735 765,775 730,750 715,715 660,775 600,800 595,820 565,830 550,858 490,850 430,850 370,875 365,910 325,955 295,970 275,950 253,940 260,912 270,925 320,920 330,885 345,865 300,895 262,905 250,885 270,860 262,825 235,835 180,855 115,885 110,905 65,940 30,985"),
  ...at(W, "1195,1268 1150,1240 1140,1195 1123,1160 1120,1120 1075,1100 1045,1130 1015,1155 1000,1190 985,1165 915,1165 915,1215 927,1222 905,1245 890,1220 850,1190 780,1150 785,1090 800,1043 770,1055 715,1100 660,1110 660,1140 673,1165 668,1210 680,1260 665,1245 655,1165 600,1170 575,1145 520,1165 518,1218 508,1170 470,1160 430,1130 450,1085 480,1070 490,1020 500,990 485,950 500,910 490,905 460,880 430,815 410,785 415,762 380,745 360,742 345,690 325,688 297,672 265,690 225,695 160,650 120,625 90,595 60,570 31,552"),
];
const islet = at(W, "165,698 180,692 215,710 210,780 193,832 160,800 118,768 158,735");

const boundary = toPath(outline, true, 0.5);
const isletPath = toPath(islet, true, 0.3);

/* Narrow inlets that stay white between neighbouring spurs. */
const slits = [
  toPath(at(N, "765,548 790,522 806,492"), false, 0.2), toPath(at(N, "907,562 930,543"), false, 0.2), toPath(at(N, "1148,628 1185,582"), false, 0.2), toPath(at(N, "605,240 620,252"), false, 0.2),
  toPath(at(C, "214,155 215,222"), false, 0.15), toPath(at(C, "44,205 46,270"), false, 0.15), toPath(at(C, "552,208 532,245 520,302"), false, 0.2),
];

const yellow = [
  toPath(at(W, "380,748 405,720 420,685 447,665 450,635 495,632 510,625 530,637 560,632 600,620 625,628 638,645 612,640 608,655 620,680 600,715 570,712 535,730 530,745 500,765 500,795 525,825 552,835 580,822 585,840 545,868 520,885 495,908 460,880 430,815 410,785 420,762 400,760"), true, 0.3),
  toPath(at(E, "155,183 185,187 215,200 250,203 270,222 325,235 318,258 290,290 255,308 250,300 215,300 190,305 215,325 222,340 205,355 180,345 160,358 180,372 155,387 120,372 140,360 125,340 80,345 70,325 82,310 65,275 90,265 90,240 130,220 135,195"), true, 0.3),
  toPath(at(E, "340,245 375,222 425,187 435,190 385,232 345,250"), true, 0.2),
];
const holes = [
  toPath(at(W, "425,808 437,812 432,825 422,820"), true), toPath(at(W, "435,835 452,832 450,850 438,852"), true),
  toPath(at(W, "568,640 600,642 605,650 570,652"), true), toPath(at(W, "385,752 400,740 410,752 395,762"), true),
  toPath(at(W, "525,835 560,840 570,860 535,858"), true),
  toPath(at(E, "155,268 172,262 178,278 165,290"), true), toPath(at(E, "250,285 275,260 295,265 280,285"), true),
  toPath(at(E, "130,258 160,250 158,285 135,280"), true), toPath(at(E, "95,305 108,300 112,320 98,322"), true),
  toPath(at(E, "190,285 208,280 205,295 192,298"), true), toPath(at(E, "130,330 170,330 175,352 140,352"), true),
  toPath(at(E, "85,260 100,270 88,278"), true),
];

const lines: [Frame, string][] = [
  [N, "510,275 470,315 430,365 400,390 362,402 365,435 345,468 330,466"],
  [N, "513,268 560,320 575,365 595,395 592,425"],
  [N, "660,395 610,405 580,445 565,490 580,522 632,520 610,560 625,620 660,658 615,695 675,685 680,740 715,780 735,765 752,780 760,738 795,742 815,715 825,665 850,705 847,770 870,785 935,745 945,785 980,780 985,740"],
  [N, "605,245 635,260 645,290 670,318"], [N, "665,165 670,200 715,235 722,262 713,300 740,310 765,290 745,315 712,320 712,350 690,370 660,410 632,430 628,468 655,460 690,475 702,500 770,505"],
  [N, "665,165 725,150 740,165 775,170 770,215 785,225 785,260 805,290 860,275"], [N, "592,180 640,185 635,210 605,220"],
  [N, "585,335 585,375 595,390"], [N, "585,335 620,365 675,360 690,368"],
  [N, "702,490 710,435 740,410 795,400"], [N, "702,492 730,465 755,490 760,500 702,494"], [N, "760,500 790,475 810,455"],
  [N, "845,485 825,515 800,570 778,640 772,575 690,600 672,598 700,580 750,560 800,520 820,490"],
  [N, "795,600 830,595 850,570 870,605 892,640 893,685 900,640 940,612 970,640 985,675"], [N, "830,595 835,575 855,570 865,600"],
  [N, "990,560 992,620 990,680 975,720"], [N, "993,560 995,640 1010,620 1040,605 1100,620 1105,680"], [N, "1000,665 1020,620 1085,610 1040,590 1090,600"],
  [N, "1155,620 1130,650 1105,690 1095,720 1115,735"], [N, "1130,660 1150,700 1180,690 1200,700"], [N, "1045,715 1060,780 1105,790 1180,810 1240,800 1260,815"],
  [N, "1045,715 1045,775 985,740"], [N, "980,740 1000,790 1030,820 1020,780 985,740"], [N, "1010,700 1035,712 1020,708"], [N, "1050,690 1062,682 1060,695 1050,697 1050,690"], [N, "865,765 880,762 872,785 860,778"], [N, "850,700 865,730 885,705 875,695"],
  [N, "1250,605 1245,680 1240,750 1260,770"], [N, "1245,640 1250,700 1230,750 1200,755 1195,700"],
  [N, "425,410 450,385 500,375 470,430 435,455 425,430 425,410"], [N, "440,505 475,490 482,522 465,508 445,520 438,508"],
  [N, "72,705 95,705 125,745 155,800 125,790 100,750 75,715"], [N, "105,718 240,715 272,713 245,750 180,770 130,760"], [N, "203,700 235,692 272,713 240,720 205,708"], [N, "130,755 200,730 235,745"],
  [N, "165,822 190,835 185,852 168,840 165,822"], [N, "405,265 420,270 420,285 400,283 405,265"], [N, "330,290 300,325 380,345 385,305 350,330"],
  [N, "200,362 300,350 360,365"], [N, "190,365 230,350 300,345"], [N, "295,225 330,245 375,225 390,240 370,260 360,290 295,320"], [N, "455,155 480,150 493,170 475,207 455,190 455,155"], [N, "555,230 540,280 515,270"],
  [N, "300,410 345,405 330,375 305,395"], [N, "185,525 235,575 250,572 215,530"], [N, "575,500 605,488 610,500 580,515 575,500"], [N, "628,335 632,320 640,338 628,335"], [N, "625,112 633,108 632,120 625,112"], [N, "465,255 475,252 476,265 467,262"], [N, "445,215 452,216 448,222"],
  [W, "448,403 490,375 540,375 600,380 690,345 760,345 800,330 835,310 830,255 900,265 960,280 968,320 965,355 1005,410 1062,430 1065,470 1088,490 1085,520 1110,545 1145,540 1180,548 1200,520 1190,465 1165,430 1160,380 1130,300 1090,285"],
  [W, "968,320 1060,310 1100,290"], [W, "1180,548 1195,520 1188,470 1160,440 1155,385 1120,310"], [W, "1088,485 1130,505 1155,540"],
  [W, "448,403 465,435 450,460 480,490 497,530 490,548 445,550"], [W, "120,515 150,535 220,545 240,525 250,513"], [W, "275,520 325,545 355,565 310,595 335,600 345,585 415,575 445,550 440,600 455,625 445,665"],
  [W, "345,467 330,480"], [W, "455,550 470,570 455,620"], [W, "583,155 640,170 680,180 750,170 775,195 800,230 860,262"], [W, "585,158 605,195 608,235 580,265 530,270"], [W, "650,190 655,235 635,300 645,330 600,345 555,350"], [W, "590,155 650,195"],
  [W, "610,112 660,112 710,130 750,135 770,180"], [W, "750,250 760,210 785,190"], [W, "800,245 805,290 790,330"], [W, "770,75 830,110 860,115"], [W, "668,75 700,90 780,95"], [W, "665,250 668,270 655,290 650,265 665,250"], [W, "748,350 770,370 755,360"],
  [W, "615,432 650,440 680,430 745,432 720,478 660,460 668,525 650,500 620,470 615,432"], [W, "665,620 710,612 715,630 695,650 668,625"], [W, "650,640 650,810"], [W, "685,950 730,1030 770,1045 800,985 850,945"], [W, "490,555 520,552 505,565 490,555"], [W, "595,400 610,398 600,412 595,400"],
  [W, "590,860 650,810 700,780 755,770"], [W, "455,625 500,625 540,590 500,595"], [W, "780,1120 850,1080 920,1065 945,1060"], [W, "1120,1120 1100,1040 1050,1000 1055,975 1100,970"], [W, "975,925 1010,935 1050,925 1110,920"], [W, "975,925 985,960 1010,990"], [W, "1100,910 1105,885 1150,840 1160,790 1175,825 1200,850 1170,880 1150,920 1090,950"], [W, "1055,1000 1080,1050 1060,1100"], [W, "1100,1020 1130,1060 1130,1140 1150,1150"], [W, "210,565 262,575 235,580 210,578 210,565"], [W, "405,500 460,535 430,530 405,500"], [W, "850,1130 900,1220"], [W, "850,1090 880,1180 905,1215"],
  [W, "145,645 170,648 160,658"], [W, "230,690 235,655 262,660 260,690"], [W, "185,675 200,665 215,690"], [W, "795,1090 900,1060"], [W, "665,1110 700,1080 710,1095"], [W, "730,840 738,838 728,862 720,860 730,840"], [W, "818,842 828,845 820,862 812,860 818,842"], [W, "735,735 755,720 762,745 740,755 735,735"], [W, "775,908 798,898 790,920 775,908"], [W, "500,600 520,588 540,590 530,600"],
  [S, "262,825 215,725 150,680 120,740 100,690 100,840 160,800 200,765 250,770 260,820"], [S, "240,670 230,700 290,800"], [S, "210,680 225,730 280,805"], [S, "300,620 310,700 295,800"],
  [S, "325,515 380,500 410,430 460,415 450,455 515,480 470,470 420,560"], [S, "325,515 380,570 400,600"], [S, "520,380 537,338 540,395 520,390 520,380"], [S, "508,435 545,418 535,450 510,440 508,435"], [S, "325,570 355,570 350,600 325,590 325,570"], [S, "455,575 470,572 468,610 455,600 455,575"], [S, "778,178 786,180 784,193 778,178"],
  [S, "520,565 550,545 560,455 590,450 595,380 585,345 620,320 650,285"], [S, "650,285 665,290 690,250 735,275"], [S, "770,230 775,270 800,310 790,340 825,370 820,420 775,480 770,545 820,560"], [S, "640,360 650,440"], [S, "720,430 740,370 790,350"],
  [S, "870,190 880,240 905,270 930,255"], [S, "925,150 945,155 945,190 925,190 925,150"], [S, "935,275 955,320 955,370 945,430 965,435 1010,400 1050,300"], [S, "945,435 890,490 865,560"], [S, "890,150 910,135 905,165 890,150"],
  [S, "1060,120 1055,180 1060,280 1085,330 1095,400 1110,490"], [S, "1100,150 1150,170 1155,200 1200,225 1240,255 1265,250 1270,330 1290,375"], [S, "1280,150 1285,230 1330,290 1370,330 1420,370"], [S, "1230,120 1275,155 1325,220"], [S, "1375,20 1400,50 1410,110 1440,150 1460,140 1490,100 1525,110 1525,150"], [S, "1395,200 1430,260 1460,270"], [S, "1285,230 1275,310 1300,375 1210,385 1180,360"], [S, "1360,80 1380,180 1385,270"], [S, "1500,240 1500,290 1530,330 1515,360 1480,365"], [S, "380,700 430,715 540,675"], [S, "485,690 480,760 430,790 420,820"], [S, "160,20 165,12 182,35 172,42 160,20"], [S, "1060,180 1120,240 1110,330"], [S, "1175,310 1190,300 1225,318 1190,345 1175,310"], [S, "1195,325 1205,305"], [S, "1290,60 1360,75 1370,100 1290,100 1290,60"],
  [C, "0,410 30,408 60,430 145,432 150,385 180,375 190,400 225,390 235,415 250,430 245,460 275,440 290,385 330,410 380,405 400,390 440,405 500,420 540,440 600,430 620,450 640,390 700,410 705,430"],
  [C, "705,430 735,465 780,468 800,420 810,465 870,465 890,490 930,485"], [C, "610,320 615,380 640,400"], [C, "610,320 620,290 650,260 650,215"], [C, "50,230 55,280 40,350 70,375 65,335 105,315 105,280 145,240 165,205 145,185"], [C, "60,225 50,300 0,370"], [C, "165,205 165,250 205,300 240,285 280,305 270,155 215,150"], [C, "280,235 355,315 370,240 430,260 470,300 515,340 550,305 605,320"], [C, "375,180 370,240 300,235"], [C, "375,290 395,350 380,335 375,290"], [C, "130,325 145,318 142,332 130,325"],
  [C, "440,235 520,255 530,225"], [C, "210,95 220,150 250,140 330,130"], [C, "145,120 140,180 165,205"], [C, "80,100 100,120 92,95"], [C, "500,265 525,270"], [C, "225,165 230,205 222,190"], [C, "995,490 1025,475 1000,510 995,490"],
  [C, "270,445 300,460 305,520 345,565 370,560 380,535 440,520 450,560 440,590"], [C, "450,545 480,485 530,485 635,495 640,540 690,560 740,565"], [C, "740,565 800,580 850,520 960,555 1000,600 1060,590 1075,610 1110,560 1200,555"], [C, "960,555 975,710 925,745 830,740"], [C, "890,540 885,740"], [C, "670,610 700,690 725,760 740,870"], [C, "640,650 655,760 680,820 640,870"], [C, "720,660 755,670 780,760 800,830 830,890 830,1000"], [C, "800,830 840,770 880,745 960,745 1030,715 1090,690 1200,680"], [C, "405,660 410,700 440,740 430,780 390,790"], [C, "960,810 1030,810 1060,850 1080,900"], [C, "905,980 940,935 1010,935 1050,990"], [C, "590,720 585,830"],
  [C, "830,105 900,100 960,110 1020,130 1060,165 1110,185 1180,200"], [C, "780,170 750,220 725,260 715,340 705,420"], [C, "785,175 755,225 730,265 720,345"], [C, "720,345 770,350 800,400"], [C, "855,225 880,170 960,230 1010,210"], [C, "800,260 880,240 970,240 1040,300"], [C, "965,460 1060,400 1110,390"], [C, "965,460 1050,465 1130,440"], [C, "550,375 595,360 595,395 555,390 550,375"], [C, "740,270 790,260 830,350 830,390"], [C, "790,180 855,225 960,235"], [C, "860,460 900,400 950,340 1020,310"],
  [E, "155,387 155,430 165,465"], [E, "0,100 60,130 120,165 200,195 260,215"], [E, "415,440 470,405 560,410 580,440 580,480 540,490 480,470 420,460"], [E, "460,445 500,455 570,460"], [E, "575,500 540,515 490,520 420,470 380,450 300,440 160,465"], [E, "575,500 660,485 700,510 690,550 780,555"], [E, "450,580 480,560 520,590 545,620 600,640"], [E, "540,625 550,680 570,740 565,780 600,820 500,800 440,740"], [E, "450,580 440,610 455,700 500,780"], [E, "0,580 40,605 80,590 110,615 160,560 240,555 280,540 330,560 370,590 360,550 440,590"], [E, "140,635 170,600 240,590 290,625 350,615 440,670 450,720"], [E, "80,640 130,665 150,660 110,620 140,640 205,650 165,625"], [E, "130,685 250,685 300,700 400,705 450,780 520,860"], [E, "290,720 310,765 400,765 440,850"], [E, "735,610 780,600 790,640 740,650 735,610"], [E, "740,650 735,690 680,670 650,640 600,640"], [E, "695,840 700,890 718,940 720,1010"], [E, "600,870 598,960"], [E, "650,980 665,920 700,890"], [E, "910,860 960,900 1020,960 1030,1010"], [E, "780,900 850,890 910,920"], [E, "235,960 300,990 355,1060"], [E, "245,950 320,1010 360,1055"], [E, "975,800 940,815"], [E, "320,260 380,255 380,310 340,315"], [E, "340,245 300,270 260,330 200,350"], [E, "160,330 260,290 330,240"], [E, "255,650 285,640 280,665 260,665 255,650"], [E, "290,808 305,818 295,822"], [E, "680,520 725,525 690,545"], [E, "360,480 385,490 370,498"], [E, "35,490 60,475 75,480 45,510 35,490"], [E, "460,640 500,640 480,720 455,700"], [E, "640,740 660,770 640,800 610,780"], [E, "340,250 400,205 435,195"],
];
const linePath = lines.map(([f, s]) => toPath(at(f, s), false, 0.55)).join("");
const ridge = ([
  [W, "583,155 640,170 680,180 745,170 775,195 830,255"], [W, "460,187 475,245 487,265 480,335"], [W, "372,320 440,328 500,360"], [W, "447,665 420,685 405,720 380,745"], [W, "400,755 450,750 490,735"], [W, "650,1110 660,1180 675,1250"], [W, "545,700 555,680"], [W, "320,220 350,270 410,290"],
  [W, "590,860 640,815"], [C, "780,170 750,220 720,280 715,340"], [C, "270,540 275,590"], [C, "830,880 830,1000"], [C, "1020,240 1060,230 1090,210 1130,200"], [C, "755,680 780,760 800,830"], [C, "585,720 590,830"], [N, "990,560 992,620 988,690"], [N, "845,485 820,520 778,640"], [N, "1245,650 1250,680 1240,745"], [N, "1150,625 1108,680"],
  [E, "155,387 155,440"], [E, "95,258 130,232 180,210"], [E, "540,630 570,740 590,810"], [E, "700,880 720,1005"], [E, "240,960 340,1050"], [E, "0,1065 60,1062 80,1077 140,1063 200,1054"],
] as [Frame, string][]).map(([f, s]) => toPath(at(f, s), false, 0.4)).join("");

function inside([x, y]: P, poly: P[]) {
  let c = false;
  for (let i = 0, j = poly.length - 1; i < poly.length; j = i++) {
    const [xi, yi] = poly[i];
    const [xj, yj] = poly[j];
    if (yi > y !== yj > y && x < ((xj - xi) * (y - yi)) / (yj - yi) + xi) c = !c;
  }
  return c;
}

/* Fills a zone with small irregular parcels and wandering borders; lean is the dominant direction in radians. */
function parcels(poly: P[], n: number, size: number, lean: number, stretch: number) {
  const xs = poly.map((p) => p[0]);
  const ys = poly.map((p) => p[1]);
  const x0 = Math.min(...xs), x1 = Math.max(...xs), y0 = Math.min(...ys), y1 = Math.max(...ys);
  let d = "";
  for (let i = 0, guard = 0; i < n * 0.72 && guard < n * 8; guard++) {
    const c: P = [x0 + rnd() * (x1 - x0), y0 + rnd() * (y1 - y0)];
    if (!inside(c, poly)) continue;
    i++;
    if (i % 4 === 0) {
      let h = lean + (rnd() < 0.5 ? 0 : Math.PI) + (rnd() - 0.5);
      const steps = 9 + Math.floor(rnd() * 16);
      let [x, y] = c;
      d += "M" + x.toFixed(1) + " " + y.toFixed(1);
      for (let j = 0; j < steps; j++) {
        const a = h + (rnd() - 0.5) * 2.3;
        h += (rnd() - 0.5) * 0.5;
        const l = 1.2 + rnd() * 1.8;
        x += Math.cos(a) * l;
        y += Math.sin(a) * l;
        d += "L" + x.toFixed(1) + " " + y.toFixed(1);
      }
      continue;
    }
    const r = size * (0.3 + rnd() * rnd() * 1.35);
    const a = lean + (rnd() - 0.5) * 2.6;
    const st = 1 + rnd() * rnd() * stretch * 0.9;
    const k = 7 + Math.floor(r * 1.3);
    const pts: P[] = [];
    let q = 0.85;
    for (let j = 0; j < k; j++) {
      const t = (j / k) * Math.PI * 2;
      q = Math.max(0.45, Math.min(1.35, q + (rnd() - 0.5) * 0.6));
      const u = Math.cos(t) * q * r * st;
      const v = (Math.sin(t) * q * r) / Math.sqrt(st);
      pts.push([c[0] + u * Math.cos(a) - v * Math.sin(a), c[1] + u * Math.sin(a) + v * Math.cos(a)]);
    }
    d += "M" + pts.map((p) => p[0].toFixed(1) + " " + p[1].toFixed(1)).join("L") + "Z";
  }
  return d;
}

const zones: [Frame, string, number, number, number, number][] = [
  [W, "510,890 640,860 700,930 690,1000 640,1110 600,1155 440,1130 500,990", 150, 4, 2.4, 1.5],
  [W, "600,850 750,730 770,760 700,900 640,940 570,900", 34, 4, 2.2, 1.5],
  [W, "320,190 380,240 450,300 330,280", 26, 4, 0.9, 2.5], [W, "370,320 480,340 490,365 380,385", 16, 4, 0.3, 2],
  [W, "545,275 635,265 630,335 560,345", 24, 4, 0.2, 1], [W, "720,85 840,90 990,130 1060,240 1130,300 1060,300 860,250 830,150", 68, 4.2, 0.5, 1.4],
  [W, "640,310 790,300 830,320 700,350 560,365", 24, 4, -0.2, 1.5], [W, "800,960 850,950 840,1060 800,1110", 24, 4, 1.5, 2],
  [W, "940,1050 1020,980 1050,1060 1000,1165 920,1165", 72, 3.6, 1.8, 1.5], [W, "1170,940 1260,850 1260,1100 1170,1190 1150,1000", 85, 4, 1.7, 1.5],
  [W, "790,1110 900,1130 910,1220 800,1150", 12, 5, 0.9, 2], [W, "640,650 690,650 680,730 650,740", 18, 3.5, 1, 1], [W, "1030,930 1110,920 1110,980 1050,960", 20, 3.4, 0, 1], [W, "1025,815 1080,840 1075,900 1040,860", 11, 3, 1, 1], [W, "610,430 740,430 720,470 660,490 620,470", 14, 3.6, 0, 1.5], [W, "120,460 200,470 210,515 150,515", 9, 4, 0.8, 2], [W, "510,750 600,750 580,800 520,800", 7, 2.2, 0.5, 1], [W, "530,835 585,825 600,870 540,870", 12, 3, 0.5, 1],
  [S, "0,620 100,610 90,740 60,880 0,900", 105, 3.8, 1.8, 1.5], [S, "0,930 40,930 20,990 0,990", 10, 3.5, 0, 1], [S, "90,690 200,690 180,770 90,800", 14, 4, 2, 1.2], [S, "150,560 190,560 170,680 135,670", 7, 4, 1.9, 1.6],
  [S, "300,610 420,500 470,480 430,560 500,620 400,690 370,830 330,880 300,830", 200, 3.6, 1.8, 1.5], [S, "400,430 460,420 440,500 380,530", 14, 4, 2, 1.5],
  [S, "500,600 600,650 720,650 720,710 640,780 560,800", 140, 4, 1, 1.5], [S, "380,835 560,800 570,840 400,855", 40, 3.4, 0, 1.2], [S, "320,890 370,870 360,910 310,950", 14, 3.5, 2, 1],
  [S, "600,440 640,360 720,300 740,360 720,520 690,620 620,640 600,560", 225, 3.5, 1.7, 1.6], [S, "665,270 730,250 790,330 740,370 690,320", 38, 4, 1.2, 1.2],
  [S, "720,510 770,480 820,400 880,430 870,600 820,700 740,720 690,640", 200, 4, 1.8, 1.6], [S, "800,310 910,290 960,210 950,330 920,420 840,460", 75, 4.2, 1.8, 1.4], [S, "870,200 930,140 950,240 900,270", 12, 3.5, 1.7, 1.5], [S, "965,240 1000,240 990,290 970,280", 6, 2.6, 1, 1],
  [S, "880,570 960,500 1000,420 1050,310 1080,440 1110,560 1000,610 980,650 930,660", 185, 4, 0.9, 2.8],
  [S, "1060,120 1080,180 1150,230 1180,330 1150,380 1080,400 1060,280", 62, 4, 1.6, 1.4], [S, "1090,400 1280,390 1400,400 1420,480 1340,530 1190,590 1110,560", 270, 4, 1.7, 1.5], [S, "1270,160 1390,250 1400,380 1290,370", 70, 4, 1.4, 1.8], [S, "1290,60 1370,80 1380,220 1320,200", 48, 3.8, 1.4, 1.6], [S, "1220,150 1280,160 1270,210 1230,190", 12, 4, 1, 1.5],
  [C, "380,800 480,780 540,720 590,740 580,830 540,890 440,920 390,870", 115, 4.2, 1.6, 1.3], [C, "460,590 530,620 560,690 480,690", 22, 4, 0.7, 1.5], [C, "490,510 620,530 600,570 510,540", 15, 3.6, 0.3, 1.6], [C, "370,540 440,560 440,600 380,590", 12, 4, 0.8, 1.5],
  [C, "560,640 640,640 620,740 570,720", 60, 3.8, 1.2, 1.3], [C, "590,760 640,740 700,860 830,860 830,1000 680,1010 620,910", 210, 4, 1.2, 1.5], [C, "640,530 760,540 880,620 880,730 800,830 720,720 650,640", 140, 4.2, 1.1, 1.9], [C, "890,550 950,560 970,720 890,730", 46, 4, 1.6, 2], [C, "690,530 850,520 860,570 700,580", 22, 4, 1.6, 1.5],
  [C, "830,830 900,760 1000,740 1060,720 1040,800 1060,900 1100,960 1130,1040 1000,1060 900,1050 840,1000", 205, 4.6, 0.3, 1.7], [C, "1000,930 1100,930 1120,1020 1030,1050", 60, 3.5, 0.1, 1.5],
  [C, "630,310 660,170 830,110 920,110 1000,130 1060,190 1040,250 980,250 860,230 760,230 720,380 640,390", 225, 4.6, 2.3, 1.7], [C, "720,250 1000,250 1040,310 870,470 830,440 730,380", 125, 4.8, 2.4, 2.6], [C, "400,385 500,410 600,420 600,440 400,410", 18, 3, 0.3, 1.2], [C, "700,340 790,350 780,400 710,400", 26, 4, 0.6, 1.5],
  [E, "0,120 80,140 130,190 60,230 0,230", 32, 4.2, 0.8, 1.4], [E, "100,390 260,310 340,250 420,215 450,300 430,410 300,430 170,450", 190, 4, 1.9, 1.5], [E, "440,300 570,290 700,330 780,400 900,450 900,560 800,530 760,490 650,440 560,400 450,390", 165, 4.3, 0.6, 1.4], [E, "650,400 860,430 870,500 730,480", 110, 2.8, 0.3, 1], [E, "850,460 915,480 935,570 880,570", 32, 3.6, 1, 1], [E, "100,470 210,490 210,515 120,510", 8, 3.6, 1, 1], [E, "230,525 340,530 300,560 240,550", 14, 2.8, 0, 1.4],
  [E, "560,640 640,640 720,700 700,810 620,820 580,720", 50, 4, 1.5, 1.6], [E, "740,600 880,560 900,640 970,700 970,780 860,770 770,700", 75, 2.9, 0.4, 1.3], [E, "450,590 520,600 500,690 460,690", 14, 4, 1.5, 1.4], [E, "740,700 820,710 910,830 910,890 780,890 740,800", 185, 3.4, 0.7, 1.4],
  [E, "770,950 900,960 1010,990 1120,1010 1140,1070 1000,1050 920,1000 780,1000", 135, 3.4, 0.1, 1.5], [E, "900,870 1000,930 1080,900 1110,990 1010,1000", 65, 4, 0.9, 1.6], [E, "600,845 670,835 670,900 620,910", 66, 3.4, 0.2, 1.2], [E, "600,910 650,910 640,980 600,960", 26, 4, 1.6, 1.4],
  [E, "330,640 430,670 440,740 390,710 340,700", 62, 3.8, 0.3, 1.4], [E, "130,690 280,690 320,770 200,780 130,740", 46, 4, 0.3, 1.3], [E, "0,700 130,690 150,740 80,780 0,800", 75, 4, 2.6, 1.6], [E, "480,870 590,870 590,960 500,970", 55, 4, 1.5, 1.6], [E, "270,900 440,850 430,900 380,1000 300,990", 75, 4.2, 0.9, 1.5], [E, "0,900 160,890 180,950 140,1040 0,1050", 90, 4.4, 0.2, 1.8], [E, "240,960 300,960 420,1020 340,1060", 30, 4.5, 0.7, 2.2], [E, "160,820 220,830 220,880 180,870", 8, 3.4, 1, 1], [E, "670,740 710,750 700,830 670,820", 10, 2.4, 1, 1],
  [N, "300,330 390,300 380,370 320,405", 22, 3.6, 0.5, 1.3], [N, "225,255 300,265 300,310 240,300", 18, 3.6, 0.6, 1], [N, "390,115 450,120 450,150 395,145", 8, 3.4, 0.2, 1.2], [N, "600,120 680,120 670,150 600,150", 11, 3.4, 0, 1.5], [N, "90,740 220,730 170,770 130,790", 12, 3.4, 0.5, 1.6], [N, "735,480 800,480 770,570 730,550", 8, 3.4, 2, 1.8],
];
const parcelPath = zones.map(([f, s, n, r, a, k]) => parcels(at(f, s), n, r, a, k)).join("");

const dots: P[] = [
  ...at(W, "1066,549 1095,592 1060,608 1042,618 1027,644 1014,650 983,664 901,730 958,781 1198,550 1019,881"),
  ...at(N, "299,688 401,725 428,743 440,797 700,656"),
  ...at(S, "323,121 306,176 318,176 516,173 86,262 122,252 133,253 209,253 79,295 88,294 101,295 152,281 269,291 280,283 72,330 130,327 166,325 291,317 291,375 282,417 173,423"),
];

function star(cx: number, cy: number) {
  return Array.from({ length: 20 }, (_, i) => {
    const r = i % 2 ? 5.6 : 9.8;
    const a = (i * Math.PI) / 10 - Math.PI / 2;
    return (cx + r * Math.cos(a)).toFixed(1) + "," + (cy + r * Math.sin(a)).toFixed(1);
  }).join(" ");
}

function MapCanvas() {
  return (
    <svg viewBox="353 238 1566 811" className="block h-full w-full" preserveAspectRatio="none">
      <defs>
        <clipPath id="land"><path d={boundary} /></clipPath>
        <filter id="glow" x="-50%" y="-50%" width="200%" height="200%"><feGaussianBlur stdDeviation="2.500" /></filter>
      </defs>
      <path d={boundary} fill="#a57056" />
      <path d={isletPath} fill="#a57056" stroke="#3b3733" strokeWidth=".9" />
      <g clipPath="url(#land)" fill="none" stroke="#38332f" strokeWidth=".95" strokeLinejoin="round">
        <path d={linePath} />
        <path d={parcelPath} strokeWidth=".85" />
        {yellow.map((d, i) => <path key={i} d={d} fill="#d6b42b" />)}
        {holes.map((d, i) => <path key={i} d={d} fill="#a57056" />)}
        <path d={ridge} strokeWidth="1.400" stroke="#2e2a27" />
        {dots.map(([x, y], i) => <circle key={i} cx={x} cy={y} r=".6" fill="#3a3531" />)}
      </g>
      {slits.map((d, i) => (
        <g key={i} fill="none">
          <path d={d} stroke="#4a4541" strokeWidth="2.800" />
          <path d={d} stroke="#fff" strokeWidth="1.300" />
        </g>
      ))}
      <path d={boundary} fill="none" stroke="#3b3733" strokeWidth="1" strokeLinejoin="round" />
      {([[588.5, 757], [1549.7, 563.7]] as P[]).map(([x, y]) => (
        <g key={x}>
          <polygon points={star(x + 3.5, y + 4)} fill="#222" opacity=".55" filter="url(#glow)" />
          <polygon points={star(x, y)} fill="#f00" />
        </g>
      ))}
    </svg>
  );
}

/* ------------------------------------------------------------------ */
/* Panels                                                              */
/* ------------------------------------------------------------------ */

function MenuBar() {
  const menus: [string, string][] = [
    ["Project", "w-[63px]"], ["Edit", "w-[44px]"], ["View", "w-[50px]"], ["Layer", "w-[54px]"], ["Settings", "w-[71px]"], ["Plugins", "w-[65px]"],
    ["Vector", "w-[60px]"], ["Raster", "w-[59px]"], ["Database", "w-[79px]"], ["Web", "w-[47px]"], ["Mesh", "w-[53px]"], ["Processing", "w-[87px]"],
    ["Window", "w-[69px]"], ["Help", "w-[60px]"],
  ];
  const cell = "flex shrink-0 items-center justify-center ";
  return (
    <div className="flex h-6 shrink-0 items-center bg-[#262626] text-[13px] font-medium tracking-[-0.1px] text-[#ececec]">
      <div className="w-[53px] shrink-0 pl-5">
        <svg width="14" height="16" viewBox="0 0 14 16" fill="#e6e6e6">
          <path d="M9.500 0c.2 1.700-1.300 3.500-2.900 3.400C6.400 1.800 8 .1 9.500 0zM7 4.500c.8 0 1.500-.7 3-.7 1.300 0 2.500.7 3.200 1.800-2.700 1.500-2.200 5.200.5 6.200-.6 1.700-2 4.100-3.500 4.100-1.200 0-1.600-.7-3-.7s-1.900.7-3 .7C2.300 15.900 0 12.500 0 9.100 0 5.800 2 4 4.100 4c1.300 0 2.300.5 2.900.5z" />
        </svg>
      </div>
      <div className="w-[52px] shrink-0 font-bold">QGIS</div>
      {menus.map(([m, w]) => <div key={m} className={"shrink-0 " + w}>{m}</div>)}
      <div className="w-[236px] shrink-0" />
      <div className={cell + "w-10"}>
        <svg width="20" height="18" viewBox="0 0 20 18"><path d="M6 12V8c0-8 11-8 11 0v6" stroke="#050505" strokeWidth="4" fill="none" /><path d="M7 7l6.500 10.500H.5z" fill="#f3c33b" /><path d="M7 10v4M7 15v1.300" stroke="#fff" strokeWidth="1.500" /></svg>
      </div>
      <div className={cell + "w-10"}>
        <svg width="17" height="17" viewBox="0 0 17 17" fill="none" strokeWidth="2.800"><path d="M5.500 11.500h-4v-10h9.500v4" stroke="#3a9ad9" /><path d="M11.500 5.500h4v10H6v-4" stroke="#d7503f" /><path d="M5.500 5l6 6.500M8 11.500h3.500V8" stroke="#7cc4f0" strokeWidth="1.500" /></svg>
      </div>
      <div className={cell + "w-9"}>
        <svg width="19" height="17" viewBox="0 0 19 17" fill="#e8e8e8"><path d="M5 0l4.500 3L5 6 .5 3zM14 0l4.500 3L14 6 9.500 3zM5 6l4.500 3L5 12 .5 9zM14 6l4.500 3L14 12 9.500 9zM9.500 11l4 2.500-4 3-4-3z" /></svg>
      </div>
      <div className={cell + "w-[38px]"}>
        <svg width="21" height="14" viewBox="0 0 21 14"><path d="M5 13.500C-1 13.500-1 6 4 5.500 6-1 14-1 16 4.500c5 .5 6 9 0 9z" fill="#a5a5a5" /><path d="M4 13.500c-5 0-4-7 1-6l11 6z" fill="#eee" /><path d="M9 9l7-4c5 0 6 8.500 0 8.500H6z" fill="#dadada" /></svg>
      </div>
      <div className={cell + "w-9"}>
        <svg width="16" height="16" viewBox="0 0 16 16"><rect width="16" height="16" rx="1" fill="#efefef" /><path d="M6.500 3h3l4 7-1.500 3H4L2.500 10z" fill="#262626" /><path d="M8 7l1.800 3.200H6.200z" fill="#efefef" /></svg>
      </div>
      <div className={cell + "w-[26px]"}>
        <svg width="16" height="15" viewBox="0 0 16 15"><rect width="16" height="15" rx="2" fill="#e9e9e9" /><circle cx="8" cy="7.500" r="6" fill="#262626" /><path d="M8 2v11M2.500 7.500h11M4 3.500l8 8M12 3.500l-8 8" stroke="#e9e9e9" strokeWidth="1.100" /></svg>
      </div>
      <div className="w-9 shrink-0 -ml-0.5 mr-0.5 whitespace-nowrap tracking-[-0.7px]">66°C</div>
      <div className={cell + "w-[38px]"}>
        <svg width="15" height="15" viewBox="0 0 15 15"><circle cx="7.500" cy="7.500" r="6.500" fill="none" stroke="#eee" strokeWidth="1.500" /><path d="M5.500 4.300l5 3.200-5 3.200z" fill="#eee" /></svg>
      </div>
      <div className={cell + "w-7"}>
        <svg width="13" height="16" viewBox="0 0 13 16" fill="none" stroke="#6f6f6f" strokeWidth="1.200"><path d="M3 5l7 6-3.500 3V2L10 5l-7 6" /><path d="M1 2l11 12" stroke="#999" /></svg>
      </div>
      <div className={cell + "w-11"}>
        <svg width="26" height="13" viewBox="0 0 26 13"><rect x=".7" y=".7" width="21.500" height="11.500" rx="3" fill="none" stroke="#a0a0a0" /><rect x="2.500" y="2.500" width="18" height="8" rx="1.500" fill="#eee" /><path d="M13 0L7.500 7.200h3.200L9.500 13l6-7.500h-3.300z" fill="#eee" stroke="#262626" /><path d="M24 4.500v4" stroke="#a0a0a0" strokeWidth="1.800" /></svg>
      </div>
      <div className={cell + "w-11"}>
        <div className="flex h-4 w-[22px] items-center justify-center rounded-[3px] border-[1.500px] border-[#e6e6e6] text-[11px] font-semibold">A</div>
      </div>
      <div className={cell + "w-9"}>
        <svg width="15" height="15" viewBox="0 0 15 15" fill="none" stroke="#eee" strokeWidth="1.300"><path d="M2 4.500A6.300 6.300 0 1 1 1.500 9M1 2l1 3 3-.6" /><path d="M7.500 4v4l2.500 2" /></svg>
      </div>
      <div className={cell + "w-10"}>
        <svg width="18" height="13" viewBox="0 0 18 13" fill="none" stroke="#eee" strokeWidth="2"><path d="M1 4.500c5-4.500 11-4.500 16 0M3.800 7.300c3.200-2.800 7.200-2.800 10.400 0" /><path d="M6.500 9.500c1.500-1.200 3.500-1.200 5 0L9 12z" fill="#eee" stroke="none" /></svg>
      </div>
      <div className={cell + "w-8"}>
        <svg width="14" height="14" viewBox="0 0 14 14" fill="none" stroke="#eee" strokeWidth="1.600"><circle cx="5.700" cy="5.700" r="4.700" /><path d="M9.200 9.200l4.200 4.200" /></svg>
      </div>
      <div className={cell + "w-[34px]"}>
        <svg width="14" height="14" viewBox="0 0 14 14"><rect x=".7" y=".7" width="12.600" height="5" rx="2.500" fill="none" stroke="#eee" strokeWidth="1.200" /><circle cx="3.500" cy="3.200" r="2" fill="#eee" /><rect y="8" width="14" height="6" rx="3" fill="#eee" /><circle cx="10.700" cy="11" r="1.800" fill="#262626" /></svg>
      </div>
      <div className={cell + "w-[30px]"}>
        <div className="flex h-[14px] w-[14px] items-center justify-center rounded-full bg-[conic-gradient(from_20deg,#37c8b5,#2a6db0,#3a3b88,#c0437a,#354060,#37c8b5)]">
          <div className="h-[5px] w-[5px] rounded-full bg-white/90 blur-[1px]" />
        </div>
      </div>
      <div className="ml-2 flex w-[124px] shrink-0 gap-[9px] whitespace-nowrap tracking-[-0.1px]"><span>Thu 28 Nov</span><span>15:23</span></div>
    </div>
  );
}

const check = (
  <svg width="10" height="10" viewBox="0 0 10 10"><path d="M1.500 5.500L4 8.500 8.500 1" stroke="#111" strokeWidth="1.500" fill="none" /></svg>
);

const smallIcons: Record<string, React.ReactNode> = {
  brush: <><path d="M1 10l5-3 5 2 5 6-4 6-9-3z" fill="#e8c53c" /><path d="M1 10l5-3 2 7-5 4z" fill="#d9443b" /><path d="M7 20l6-6 3 3-4 5z" fill="#4f82bb" /><path d="M10 10l3-3 3 2 6-8 2 2-7 8 2 3-4 3z" fill="#e29a3d" stroke="#8b5412" /></>,
  group: <><path d="M2 9h9v13H2zM6 5h10v13H6z" fill="#eee" stroke="#777" strokeWidth="1.300" /><path d="M10 2h9v13h-9z" fill="#eee" stroke="#777" /><path d="M13 17V4c0-3 4-3 4 0v9" stroke={NAVY} strokeWidth="1.600" fill="none" /><Badge k="g+" /></>,
  eye: <><path d="M1 13C6 4 18 4 23 13 18 20 6 20 1 13z" fill="#eee" stroke="#777" strokeWidth="1.500" /><circle cx="12" cy="12" r="4.500" fill="#5b86bb" /><circle cx="12" cy="12" r="2" fill="#223" /><path d="M2 8C8 1 16 1 22 8" stroke="#888" strokeWidth="1.500" fill="none" /><path d="M16 20h8l-4 4z" fill="#444" /></>,
  filter: <><path d="M1 2h22v4H1z" fill="#f2e04c" stroke="#b49410" /><path d="M1 7h22l-8 8v8l-5-2v-6z" fill="#5b8fca" stroke={NAVY} /></>,
  eps: <><text x="-1" y="15" fontSize="23" fontFamily="DejaVu Sans, sans-serif" fill="#6d3f80">ε</text><path d="M13 13h10v10h-3v-6h-4v6h-3z" fill="#b8b8b8" stroke="#777" strokeWidth=".8" /></>,
  expand: <><path d="M1 3h14M4 3v18M4 11h5M4 20h5" stroke="#888" strokeWidth="1.300" /><path d="M7 8h5v5H7zM7 17h5v5H7z" fill="#f6a52a" stroke="#c27610" /><path d="M15 1h5v13h4l-6.500 8L11 14h4z" fill="#5b86bb" stroke={NAVY} /></>,
  collapse: <><path d="M1 3h14M4 3v18M4 11h5M4 20h5" stroke="#888" strokeWidth="1.300" /><path d="M7 8h5v5H7zM7 17h5v5H7z" fill="#f6a52a" stroke="#c27610" /><path d="M15 22h5V9h4l-6.500-8L11 9h4z" fill="#5b86bb" stroke={NAVY} /></>,
  remove: <><path d="M2 2h18v18H2z" fill="#eee" stroke="#777" strokeWidth="1.400" /><rect x="14" y="15" width="10" height="8" rx="2" fill="#e53a43" /><path d="M16 19h6" stroke="#fff" strokeWidth="1.800" /></>,
};

function LayerRow({ name, on, swatch, chip, kind }: { name: string; on: boolean; swatch?: string; chip?: boolean; kind?: string }) {
  return (
    <div className={"flex h-[18px] shrink-0 items-center " + (kind === "sel" ? "bg-[#d9d9d9]" : "")}>
      <div className="flex w-[23px] shrink-0 items-center justify-center pr-[3px]">
        {kind === "group" && <svg width="5" height="8" viewBox="0 0 5 8"><path d="M0 0l5 4-5 4z" fill="#555" /></svg>}
      </div>
      <div className="flex h-[14px] w-[14px] shrink-0 items-center justify-center border border-[#b9b9b9] bg-white">{on && check}</div>
      <div className="flex w-[28px] shrink-0 items-center justify-center">
        {swatch && <div className={"h-4 w-4 border border-black/30 " + swatch} />}
        {kind === "star" && <svg width="8" height="8" viewBox="0 0 8 8"><circle cx="4" cy="4" r="2.600" fill="#f00" /><path d="M4 .3v7.400M.3 4h7.400M1.400 1.400l5.200 5.200M6.600 1.400L1.400 6.600" stroke="#f00" strokeWidth=".9" /></svg>}
        {kind === "group" && <svg width="14" height="15" viewBox="0 0 14 15" fill="#f6f6f6" stroke="#777"><path d="M1 6h7v8H1zM3.500 3.500h6v8h-6zM6 1.500h6.500v9H6z" /><path d="M8 11V3c0-1.500 2-1.500 2 0v5" stroke={NAVY} /></svg>}
      </div>
      <div
        className={
          "grow whitespace-nowrap text-[13px] leading-[18px] " +
          (kind === "group" ? "text-[#222]" : kind === "off" ? "font-bold italic tracking-[0.32px] text-[#858585]" : kind === "sel" ? "font-bold tracking-[0.1px] text-black underline" : "font-bold tracking-[0.1px] text-[#222]")
        }
      >
        {name}
      </div>
      {chip && (
        <div className="mr-px flex h-4 w-4 shrink-0 items-center justify-center bg-white/70">
          <svg width="13" height="11" viewBox="0 0 13 11" fill="none" stroke={kind === "sel" ? "#a3abb5" : "#7d7d7d"}><rect x="1" y="2.500" width="11" height="6" rx="1" fill="#fff" /><path d="M3.500 0v2M6.500 0v2M9.500 0v2M3.500 9v2M6.500 9v2M9.500 9v2" /></svg>
        </div>
      )}
      <div className={"mr-px h-4 w-[3px] shrink-0 " + (kind === "sel" ? "" : "bg-[#e4e4e4]")} />
    </div>
  );
}

function LayersPanel() {
  const box = "flex h-[12px] w-[12px] items-center justify-center rounded-[2px] border border-[#666]";
  return (
    <div className="flex w-[301px] shrink-0 flex-col border-l border-[#b5b5b5] bg-[#ebebeb] pr-[6px]">
      <div className="flex h-5 shrink-0 items-center justify-between pl-1 pr-[2px] text-[12px] text-[#262626]">
        <span>Layers</span>
        <div className="flex gap-[2px]">
          <div className={box}><svg width="8" height="8" viewBox="0 0 8 8" fill="none" stroke="#555"><path d="M.5 3.500h4v4h-4zM3 3V.5h4.500V5H5" /></svg></div>
          <div className={box}><svg width="8" height="8" viewBox="0 0 8 8"><path d="M1 1l6 6M7 1L1 7" stroke="#555" strokeWidth="2" /></svg></div>
        </div>
      </div>
      <div className="flex h-[30px] shrink-0 items-center pb-[2px] pl-[3.500px]">
        {["brush", "group", "eye", "filter", "eps", "v", "expand", "collapse", "remove"].map((n) => (
          <div key={n} className={"flex shrink-0 items-center justify-center " + (n === "v" ? "w-[11px]" : "w-[25px]")}>
            {n === "v" ? <Caret /> : <Svg s={15}>{smallIcons[n]}</Svg>}
          </div>
        ))}
      </div>
      <div className="flex grow flex-col border border-[#b5b5b5] bg-white">
        <LayerRow name="Error output" on kind="star" chip />
        <LayerRow name="Valid output" on swatch="bg-[#a88e88]" kind="sel" chip />
        <LayerRow name="Invalid output" on swatch="bg-[#d6b42b]" chip />
        <LayerRow name="PORN_EN_SNevada_2011" on={false} swatch="bg-[#7c8b90]" kind="off" />
        <LayerRow name="group1" on={false} kind="group" />
      </div>
      <div className="mt-[1px] flex h-[26px] shrink-0 items-start border-t border-[#b5b5b5] text-[12.500px] text-[#222]">
        <div className="-mt-px flex h-[26px] w-[65px] items-center justify-center rounded-b-[3px] border border-t-0 border-[#b0b0b0] bg-[#f2f2f2] pt-[2px]">Layers</div>
        <div className="flex h-[23px] w-[73px] items-center justify-center rounded-b-[3px] border border-l-0 border-t-0 border-[#b0b0b0] bg-[#d9d9d9] pt-[2px]">Browser</div>
      </div>
    </div>
  );
}

function SideBar() {
  const items = ["vecAdd", "raster", "mesh", "comma", "featherAdd", "vrtAdd", "pg+", "globeOld+", "globeDark", "wfs+", "vecNew+"];
  return (
    <div className="flex w-[51px] shrink-0 flex-col bg-linear-to-r from-[#f6f6f6] to-[#e8e8e8]">
      <div className="flex h-3 shrink-0 items-center justify-center pl-[3px]">
        <div className="h-[4px] w-4 border-y border-dotted border-[#b9b9b9]" />
      </div>
      {items.map((n) => (
        <div key={n} className="flex h-8 shrink-0 items-center pl-2">
          <Svg>{icons[n.replace("+", "")]}</Svg>
          {n.endsWith("+") && <div className="ml-[7px]"><Caret /></div>}
        </div>
      ))}
    </div>
  );
}

function StatusBar() {
  const field = "flex h-[23px] shrink-0 items-center rounded-[2px] border border-[#a9a9a9] bg-white ";
  return (
    <div className="flex h-[31px] shrink-0 items-center rounded-b-[9px] bg-[#ebebeb] pt-[2px] text-[12px] tracking-[-0.1px] text-[#111]">
      <div className={field + "ml-1 w-[216px] rounded-[3px] pl-2 text-[13px] text-[#808080]"}>
        <svg width="13" height="13" viewBox="0 0 13 13" fill="none" stroke="#888" strokeWidth="1.300"><circle cx="5" cy="5" r="4" /><path d="M8 8l4.500 4.500" /></svg>
        <span className="ml-[7px] tracking-[-0.15px]">Type to locate (⌘K)</span>
      </div>
      <span className="ml-2 grow tracking-[-0.25px]">1 legend entries removed.</span>
      <span className="w-[61px] shrink-0 tracking-[-0.3px]">Coordinate</span>
      <div className={field + "w-[114px] justify-center"}>472295,4132178</div>
      <div className="flex w-[33px] shrink-0 justify-start pl-[5px]">
        <svg width="16" height="16" viewBox="0 0 16 16" fill="#eee" stroke="#333"><ellipse cx="9.500" cy="10" rx="4.200" ry="5.500" transform="rotate(-25 9.500 10)" /><path d="M1 2l9 8M4 1l7 8M1 6l6 6M7 8.500l5-3M11 6l3.500-4.500M6 11l5-2" /></svg>
      </div>
      <span className="w-8 shrink-0">Scale</span>
      <div className={field + "w-[92px] justify-between pl-[3px]"}>
        1:178318
        <div className="flex h-full w-[20px] items-center justify-center border-l border-[#b0b0b0] bg-[#f3f3f3]"><svg width="8" height="5" viewBox="0 0 8 5"><path d="M0 0h8L4 5z" fill="#444" /></svg></div>
      </div>
      <div className="flex w-[35px] shrink-0 justify-center">
        <svg width="12" height="15" viewBox="0 0 12 15"><path d="M2.500 7V4.500c0-5 7-5 7 0V7" stroke="#777" strokeWidth="1.600" fill="none" /><rect y="6.500" width="12" height="8.500" rx="1" fill="#666" /></svg>
      </div>
      <span className="w-[53px] shrink-0 tracking-[-0.3px]">Magnifier</span>
      <div className={field + "w-[96px] justify-between pl-1"}>100%<Steps /></div>
      <span className="ml-[9px] w-[53px] shrink-0 tracking-[-0.3px]">Rotation</span>
      <div className={field + "w-[93px] justify-between pl-1"}>0,0 °<Steps /></div>
      <div className="ml-[7px] flex h-[13px] w-[13px] shrink-0 items-center justify-center border border-[#aaa] bg-white">{check}</div>
      <span className="ml-[5px] w-[53px] shrink-0 tracking-[-0.3px]">Render</span>
      <svg width="15" height="14" viewBox="0 0 15 14" fill="none" stroke="#777" className="shrink-0"><circle cx="7.500" cy="6" r="5.500" fill="#c9c9c9" /><ellipse cx="7.500" cy="6" rx="2.500" ry="5.500" /><path d="M0 7h15M3 3.500h9M2.500 9.500h10M7.500.5v13M4 13h7" /></svg>
      <span className="ml-[2px] w-[92px] shrink-0 tracking-[-0.3px]">EPSG:23030</span>
      <svg width="16" height="15" viewBox="0 0 16 15" className="mr-[7px] shrink-0"><path d="M8 0c10 0 10 12 1 12l3 3-6-3C-2 11-2 0 8 0z" fill="#5f5f5f" /><path d="M4 6h1.600M7.200 6h1.600M10.400 6H12" stroke="#eee" strokeWidth="1.600" /></svg>
    </div>
  );
}

export default function App() {
  return (
    <div className="relative flex h-[1080px] w-[1920px] flex-col overflow-hidden bg-black font-['Inter','Liberation_Sans',sans-serif]">
      <MenuBar />
      <div className="h-px shrink-0 bg-[#1b1617]" />
      <div className="flex h-[57px] shrink-0 flex-col items-center rounded-t-[9px] border-b border-[#cdcdcd] bg-[#eeeeee] text-[#404040]">
        <div className="flex h-[28px] w-full items-center">
          <div className="flex w-[60px] gap-[8px] pl-2">
            <span className="h-3 w-3 rounded-full border border-[#e2463f] bg-[#ff5f57]" />
            <span className="h-3 w-3 rounded-full border border-[#e1a116] bg-[#febc2e]" />
            <span className="h-3 w-3 rounded-full border border-[#12ac28] bg-[#28c840]" />
          </div>
          <div className="grow text-center text-[13px] font-bold tracking-[0.12px]">*Untitled Project - QGIS</div>
          <div className="w-[60px]" />
        </div>
        <div className="flex h-[28px] items-center pt-px text-[11px] tracking-[0.1px]">*Untitled Project - QGIS</div>
      </div>
      <Bar cls="h-[38px]">
        <Tools items="h13 newDoc open save layout layoutMgr styles h17 hand pan zoomIn zoomOut zoomFull zoomSel zoomLayer -zoomNat zoomLast -zoomNext newMap bookmark bookmarks refresh h16 info -action v select v selForm v desel table abacus gear sigma ruler v tips anno v" />
      </Bar>
      <Bar>
        <Tools items="h13 dsm geopkg vecNew featherNew chip | vrt h17 -pencils^ pencil -saveEdit -addFeat -vertex v -multi -trash -cut -copy -paste -undo -redo h15 label diagram | labelPin labelRed | -lblPin -lblEye -lblMove -lblRot -lblEdit h17 db h16 globeAdd globeSearch globeBino h16 python h15 help h16 sheet" />
      </Bar>
      <Bar>
        <Tools items="h13 -tri -fMove v -fRot -fSimp -fRing -fPart -fFill -fRingX -fPartX -fReshape -fOffset -fSplitV -fCross -scis -scis -merge -align -rotSym v h16 -hist -histA -hist -histA -sunU -sunD -conU -conD grid _378 h13 magnet -snapV^ -snapP^" />
        <div className="flex h-[22px] w-[98px] shrink-0 items-center justify-between rounded-[2px] border border-[#a9a9a9] bg-white pl-1 text-[12.500px] text-[#b5b5b5]">12<Steps /></div>
        <div className="ml-[1px] mr-px flex h-[23px] w-[100px] shrink-0 items-center justify-between rounded-[2px] border border-[#b9b9b9] bg-[#efefef] pl-1 pr-[6px] text-[12.500px] text-[#9a9a9a]">
          px
          <svg width="8" height="5" viewBox="0 0 8 5"><path d="M0 0h8L4 5z" fill="#aaa" /></svg>
        </div>
        <Tools items="topo -inter -trace v" />
      </Bar>
      <Bar cls="h-[38px]">
        <Tools items="h13 -arc v -circ v -ell v -rect v -poly v h16" />
        <div className="ml-[4px] mr-[4px] flex h-6 w-6 shrink-0 items-center justify-center border-[1.500px] border-[#ff1414] bg-[#f6f6f6]">
          <svg width="12" height="12" viewBox="0 0 12 12"><path d="M6 0v12M0 6h12" stroke="#2a2aff" strokeWidth="1.600" /></svg>
        </div>
        <Tools items="v" />
      </Bar>
      <div className="flex min-h-0 grow bg-[#ebebeb] pt-px">
        <SideBar />
        <LayersPanel />
        <div className="min-w-0 grow border border-[#b1b1b1] bg-white">
          <MapCanvas />
        </div>
      </div>
      <StatusBar />
      <div className="absolute right-0 top-[87px] flex h-5 w-[140px] items-center justify-center rounded-[2px] border border-[#cfcfcf] bg-[#e0e0e0] text-[11px] tracking-[0.1px] text-[#3a3a3a] shadow-md">*Untitled Project - QGIS</div>
      <svg className="absolute right-0 top-[65px]" width="7" height="12" viewBox="0 0 7 12"><path d="M0 6l5-5v3.500h2v3H5V11z" fill="#000" stroke="#fff" strokeWidth=".6" /></svg>
    </div>
  );
}
